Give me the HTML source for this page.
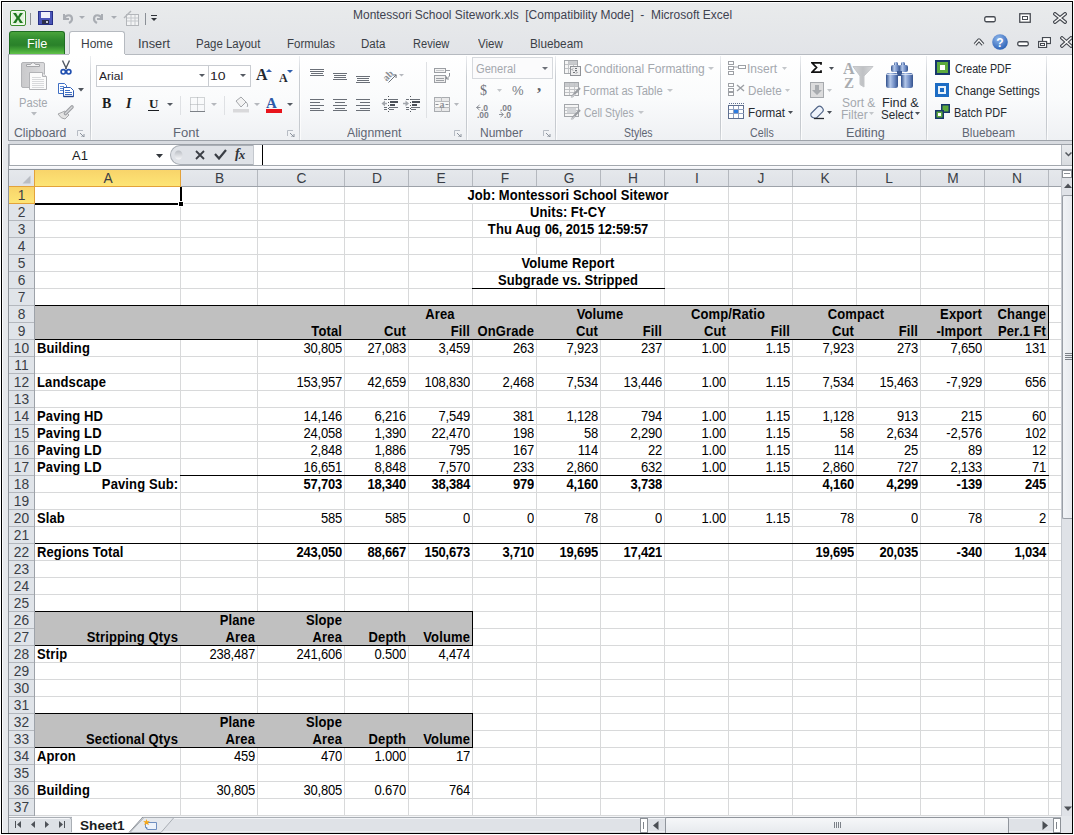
<!DOCTYPE html>
<html><head><meta charset="utf-8"><title>Excel</title>
<style>
html,body{margin:0;padding:0;}
body{width:1074px;height:835px;position:relative;overflow:hidden;background:#fff;font-family:'Liberation Sans', sans-serif;}
</style></head><body>
<div style="position:absolute;left:1px;top:1px;width:1072px;height:833px;background:#000;"></div>
<div style="position:absolute;left:2px;top:2px;width:1070px;height:831px;background:linear-gradient(#e9ebec,#e2e4e8 52px,#e6e8eb 60px,#e7e9ec);"></div>
<div style="position:absolute;left:2px;top:2px;width:1070px;height:1px;background:#fbfbfc;"></div>
<div style="position:absolute;left:2px;top:2px;width:1px;height:831px;background:#fbfbfc;"></div>
<svg style="position:absolute;left:10px;top:10px" width="16" height="16" viewBox="0 0 16 16"><rect x="0.5" y="0.5" width="15" height="15" rx="1.5" fill="#f4fbf2" stroke="#3e8e2f"/><rect x="2" y="2" width="12" height="12" fill="#e2f2dc"/><path d="M3 3 L6 3 L8 6.5 L10 3 L13 3 L9.5 8 L13 13 L10 13 L8 9.5 L6 13 L3 13 L6.5 8 Z" fill="#1f7a1f"/></svg>
<div style="position:absolute;left:30px;top:13px;width:1px;height:12px;background:#8a8f96;"></div>
<svg style="position:absolute;left:38px;top:11px" width="15" height="14" viewBox="0 0 15 14"><rect x="0.5" y="0.5" width="14" height="13" fill="#4a55b8" stroke="#262f86"/><rect x="3" y="1" width="9" height="6" fill="#f0f2fa"/><rect x="4" y="9" width="7" height="4" fill="#2b2f4a"/><rect x="8" y="10" width="2" height="2" fill="#c8cbd8"/></svg>
<svg style="position:absolute;left:61px;top:12px" width="13" height="12" viewBox="0 0 13 12"><path d="M3 2 L3 7 L8 7" fill="none" stroke="#a9adb3" stroke-width="2"/><path d="M3 7 C5 2 11 2 11 7 C11 9 10 10 8 11" fill="none" stroke="#a9adb3" stroke-width="2.2"/></svg>
<svg style="position:absolute;left:79px;top:16px" width="6" height="4" viewBox="0 0 6 4"><path d="M0 0 L6 0 L3 3 Z" fill="#a9adb3"/></svg>
<svg style="position:absolute;left:92px;top:12px" width="13" height="12" viewBox="0 0 13 12"><path d="M10 2 L10 7 L5 7" fill="none" stroke="#a9adb3" stroke-width="2"/><path d="M10 7 C8 2 2 2 2 7 C2 9 3 10 5 11" fill="none" stroke="#a9adb3" stroke-width="2.2"/></svg>
<svg style="position:absolute;left:111px;top:16px" width="6" height="4" viewBox="0 0 6 4"><path d="M0 0 L6 0 L3 3 Z" fill="#a9adb3"/></svg>
<svg style="position:absolute;left:123px;top:10px" width="17" height="16" viewBox="0 0 17 16"><rect x="3.5" y="4.5" width="12" height="11" fill="#f2f3f4" stroke="#b3b6ba"/><path d="M4 8h11M4 11h11M8 5v10M12 5v10" stroke="#c4c7cb"/><path d="M1 8 L8 1" stroke="#b3b6ba" stroke-width="1.5"/></svg>
<div style="position:absolute;left:145px;top:13px;width:1px;height:12px;background:#8a8f96;"></div>
<svg style="position:absolute;left:151px;top:15px" width="6" height="7" viewBox="0 0 6 7"><rect x="0" y="0" width="6" height="1" fill="#30343a"/><path d="M0 3 L6 3 L3 6 Z" fill="#30343a"/></svg>
<div style="position:absolute;left:353.00px;top:8px;white-space:nowrap;transform-origin:0 0;font:12px 'Liberation Sans', sans-serif;color:#3e4250;transform:scaleX(0.9974);">Montessori School Sitework.xls&nbsp; [Compatibility Mode]&nbsp; -&nbsp; Microsoft Excel</div>
<svg style="position:absolute;left:984px;top:16px" width="12" height="7" viewBox="0 0 12 7"><rect x="0.75" y="0.75" width="10.5" height="5" rx="1.5" fill="#fff" stroke="#474b52" stroke-width="1.3"/></svg>
<svg style="position:absolute;left:1019px;top:13px" width="12" height="10" viewBox="0 0 12 10"><rect x="0.75" y="0.75" width="10.5" height="8.5" fill="#fff" stroke="#474b52" stroke-width="1.3"/><rect x="3.5" y="3.5" width="5" height="3" fill="none" stroke="#474b52"/></svg>
<svg style="position:absolute;left:1053px;top:12px" width="14" height="12" viewBox="0 0 14 12"><path d="M2 2 L12 10 M12 2 L2 10" stroke="#474b52" stroke-width="3.8" stroke-linecap="square"/><path d="M2 2 L12 10 M12 2 L2 10" stroke="#fafafa" stroke-width="1.5" stroke-linecap="square"/></svg>
<div style="position:absolute;left:9px;top:31px;width:56px;height:23px;background:linear-gradient(#4aa43c,#2f8a2e 35%,#2a812a 60%,#48a93a 85%,#62c24a);border:1px solid #1f6d22;border-bottom:none;border-radius:3px 3px 0 0;box-sizing:border-box;"></div>
<div style="position:absolute;left:26.94px;top:37px;white-space:nowrap;transform-origin:0 0;font:12px 'Liberation Sans', sans-serif;color:#fff;transform:scaleX(1.0556);">File</div>
<div style="position:absolute;left:69px;top:31px;width:56px;height:24px;background:#fff;border:1px solid #b6bac0;border-bottom:none;border-radius:3px 3px 0 0;box-sizing:border-box;"></div>
<div style="position:absolute;left:81.00px;top:37px;white-space:nowrap;transform-origin:0 0;font:12px 'Liberation Sans', sans-serif;color:#3b3f46;transform:scaleX(1.0000);">Home</div>
<div style="position:absolute;left:137.93px;top:37px;white-space:nowrap;transform-origin:0 0;font:12px 'Liberation Sans', sans-serif;color:#3b3f46;transform:scaleX(1.0690);">Insert</div>
<div style="position:absolute;left:196.05px;top:37px;white-space:nowrap;transform-origin:0 0;font:12px 'Liberation Sans', sans-serif;color:#3b3f46;transform:scaleX(0.9545);">Page Layout</div>
<div style="position:absolute;left:287.04px;top:37px;white-space:nowrap;transform-origin:0 0;font:12px 'Liberation Sans', sans-serif;color:#3b3f46;transform:scaleX(0.9592);">Formulas</div>
<div style="position:absolute;left:361.04px;top:37px;white-space:nowrap;transform-origin:0 0;font:12px 'Liberation Sans', sans-serif;color:#3b3f46;transform:scaleX(0.9600);">Data</div>
<div style="position:absolute;left:413.08px;top:37px;white-space:nowrap;transform-origin:0 0;font:12px 'Liberation Sans', sans-serif;color:#3b3f46;transform:scaleX(0.9231);">Review</div>
<div style="position:absolute;left:478.00px;top:37px;white-space:nowrap;transform-origin:0 0;font:12px 'Liberation Sans', sans-serif;color:#3b3f46;transform:scaleX(0.9615);">View</div>
<div style="position:absolute;left:530.02px;top:37px;white-space:nowrap;transform-origin:0 0;font:12px 'Liberation Sans', sans-serif;color:#3b3f46;transform:scaleX(0.9808);">Bluebeam</div>
<svg style="position:absolute;left:973px;top:37px" width="12" height="10" viewBox="0 0 12 10"><path d="M2 7.5 L6 3 L10 7.5" fill="none" stroke="#474b52" stroke-width="3.4" stroke-linejoin="round"/><path d="M2 7.5 L6 3 L10 7.5" fill="none" stroke="#fafafa" stroke-width="1.3"/></svg>
<svg style="position:absolute;left:992px;top:34px" width="16" height="16" viewBox="0 0 16 16"><defs><radialGradient id="hg" cx="40%" cy="30%" r="70%"><stop offset="0" stop-color="#8fb6ea"/><stop offset="1" stop-color="#2f64b8"/></radialGradient></defs><circle cx="8" cy="8" r="7.8" fill="url(#hg)"/><text x="8" y="13" text-anchor="middle" font-family="Liberation Sans" font-weight="bold" font-size="12" fill="#fff">?</text></svg>
<svg style="position:absolute;left:1017px;top:41px" width="12" height="6" viewBox="0 0 12 6"><rect x="0.75" y="0.75" width="10.5" height="4" rx="1.5" fill="#fff" stroke="#474b52" stroke-width="1.3"/></svg>
<svg style="position:absolute;left:1038px;top:37px" width="13" height="11" viewBox="0 0 13 11"><rect x="4.5" y="0.5" width="8" height="6" fill="#fff" stroke="#474b52" stroke-width="1.2"/><rect x="0.6" y="4.5" width="8" height="6" fill="#fff" stroke="#474b52" stroke-width="1.2"/><rect x="2.5" y="6.5" width="4" height="2" fill="none" stroke="#474b52"/></svg>
<svg style="position:absolute;left:1060px;top:36px" width="12" height="12" viewBox="0 0 12 12"><path d="M2 2 L11 10 M11 2 L2 10" stroke="#474b52" stroke-width="3.6" stroke-linecap="square"/><path d="M2 2 L11 10 M11 2 L2 10" stroke="#fafafa" stroke-width="1.4" stroke-linecap="square"/></svg>
<div style="position:absolute;left:8px;top:54px;width:1064px;height:87px;background:linear-gradient(#ffffff,#fafbfc 50%,#eef0f3);border-top:1px solid #b6bac0;border-left:1px solid #9ca1a8;box-sizing:border-box;"></div>
<div style="position:absolute;left:69px;top:54px;width:56px;height:1px;background:#fff;"></div>
<div style="position:absolute;left:8px;top:140px;width:1064px;height:1px;background:#9ea3aa;"></div>
<div style="position:absolute;left:9px;top:141px;width:1063px;height:3px;background:#d8dbe0;"></div>
<div style="position:absolute;left:90px;top:56px;width:1px;height:84px;background:linear-gradient(#eceef1,#c9cdd2 25%,#c6cacf 85%,#d5d8dc);"></div>
<div style="position:absolute;left:91px;top:56px;width:1px;height:84px;background:rgba(255,255,255,0.7);"></div>
<div style="position:absolute;left:299px;top:56px;width:1px;height:84px;background:linear-gradient(#eceef1,#c9cdd2 25%,#c6cacf 85%,#d5d8dc);"></div>
<div style="position:absolute;left:300px;top:56px;width:1px;height:84px;background:rgba(255,255,255,0.7);"></div>
<div style="position:absolute;left:466px;top:56px;width:1px;height:84px;background:linear-gradient(#eceef1,#c9cdd2 25%,#c6cacf 85%,#d5d8dc);"></div>
<div style="position:absolute;left:467px;top:56px;width:1px;height:84px;background:rgba(255,255,255,0.7);"></div>
<div style="position:absolute;left:555px;top:56px;width:1px;height:84px;background:linear-gradient(#eceef1,#c9cdd2 25%,#c6cacf 85%,#d5d8dc);"></div>
<div style="position:absolute;left:556px;top:56px;width:1px;height:84px;background:rgba(255,255,255,0.7);"></div>
<div style="position:absolute;left:720px;top:56px;width:1px;height:84px;background:linear-gradient(#eceef1,#c9cdd2 25%,#c6cacf 85%,#d5d8dc);"></div>
<div style="position:absolute;left:721px;top:56px;width:1px;height:84px;background:rgba(255,255,255,0.7);"></div>
<div style="position:absolute;left:800px;top:56px;width:1px;height:84px;background:linear-gradient(#eceef1,#c9cdd2 25%,#c6cacf 85%,#d5d8dc);"></div>
<div style="position:absolute;left:801px;top:56px;width:1px;height:84px;background:rgba(255,255,255,0.7);"></div>
<div style="position:absolute;left:926px;top:56px;width:1px;height:84px;background:linear-gradient(#eceef1,#c9cdd2 25%,#c6cacf 85%,#d5d8dc);"></div>
<div style="position:absolute;left:927px;top:56px;width:1px;height:84px;background:rgba(255,255,255,0.7);"></div>
<div style="position:absolute;left:1046px;top:56px;width:1px;height:84px;background:linear-gradient(#eceef1,#c9cdd2 25%,#c6cacf 85%,#d5d8dc);"></div>
<div style="position:absolute;left:1047px;top:56px;width:1px;height:84px;background:rgba(255,255,255,0.7);"></div>
<div style="position:absolute;left:14.00px;top:126px;white-space:nowrap;transform-origin:0 0;font:12px 'Liberation Sans', sans-serif;color:#5f6673;transform:scaleX(1.0196);">Clipboard</div>
<div style="position:absolute;left:172.91px;top:126px;white-space:nowrap;transform-origin:0 0;font:12px 'Liberation Sans', sans-serif;color:#5f6673;transform:scaleX(1.0870);">Font</div>
<div style="position:absolute;left:347.00px;top:126px;white-space:nowrap;transform-origin:0 0;font:12px 'Liberation Sans', sans-serif;color:#5f6673;transform:scaleX(1.0189);">Alignment</div>
<div style="position:absolute;left:480.00px;top:126px;white-space:nowrap;transform-origin:0 0;font:12px 'Liberation Sans', sans-serif;color:#5f6673;transform:scaleX(1.0000);">Number</div>
<div style="position:absolute;left:624.12px;top:126px;white-space:nowrap;transform-origin:0 0;font:12px 'Liberation Sans', sans-serif;color:#5f6673;transform:scaleX(0.8750);">Styles</div>
<div style="position:absolute;left:750.00px;top:126px;white-space:nowrap;transform-origin:0 0;font:12px 'Liberation Sans', sans-serif;color:#5f6673;transform:scaleX(0.8889);">Cells</div>
<div style="position:absolute;left:845.94px;top:126px;white-space:nowrap;transform-origin:0 0;font:12px 'Liberation Sans', sans-serif;color:#5f6673;transform:scaleX(1.0571);">Editing</div>
<div style="position:absolute;left:962.02px;top:126px;white-space:nowrap;transform-origin:0 0;font:12px 'Liberation Sans', sans-serif;color:#5f6673;transform:scaleX(0.9808);">Bluebeam</div>
<svg style="position:absolute;left:77px;top:130px" width="8" height="7" viewBox="0 0 8 7"><path d="M0.5 6 L0.5 0.5 L6 0.5" fill="none" stroke="#b7bcc4"/><path d="M3 3 L7 7 M7 4 L7 7 L4 7" fill="none" stroke="#8c939d"/></svg>
<svg style="position:absolute;left:287px;top:130px" width="8" height="7" viewBox="0 0 8 7"><path d="M0.5 6 L0.5 0.5 L6 0.5" fill="none" stroke="#b7bcc4"/><path d="M3 3 L7 7 M7 4 L7 7 L4 7" fill="none" stroke="#8c939d"/></svg>
<svg style="position:absolute;left:454px;top:130px" width="8" height="7" viewBox="0 0 8 7"><path d="M0.5 6 L0.5 0.5 L6 0.5" fill="none" stroke="#b7bcc4"/><path d="M3 3 L7 7 M7 4 L7 7 L4 7" fill="none" stroke="#8c939d"/></svg>
<svg style="position:absolute;left:543px;top:130px" width="8" height="7" viewBox="0 0 8 7"><path d="M0.5 6 L0.5 0.5 L6 0.5" fill="none" stroke="#b7bcc4"/><path d="M3 3 L7 7 M7 4 L7 7 L4 7" fill="none" stroke="#8c939d"/></svg>
<svg style="position:absolute;left:20px;top:60px" width="28" height="31" viewBox="0 0 28 31"><defs><linearGradient id="cbg" x1="0" x2="1"><stop offset="0" stop-color="#c9c9cb"/><stop offset="1" stop-color="#dcdcde"/></linearGradient></defs><rect x="1.5" y="2.5" width="23" height="25" rx="1.5" fill="url(#cbg)" stroke="#b3b4b7"/><path d="M6.5 6.5 L6.5 4.5 L10.5 4.5 Q13 0.5 15.5 4.5 L19.5 4.5 L19.5 6.5 Z" fill="#f2f2f3" stroke="#a4a5a8"/><path d="M9.5 12.5 L22.5 12.5 L26.5 16.5 L26.5 29.5 L9.5 29.5 Z" fill="#fbfbfb" stroke="#b2b3b6"/><path d="M22.5 12.5 L22.5 16.5 L26.5 16.5" fill="#e6e6e7" stroke="#b2b3b6"/><path d="M12 17.5h9M12 19.5h12M12 21.5h12M12 23.5h12M12 25.5h12M12 27.5h12" stroke="#d8d9db"/></svg>
<div style="position:absolute;left:19.07px;top:96px;white-space:nowrap;transform-origin:0 0;font:12px 'Liberation Sans', sans-serif;color:#a4a8ae;transform:scaleX(0.9310);">Paste</div>
<svg style="position:absolute;left:31px;top:112px" width="6" height="4" viewBox="0 0 6 4"><path d="M0 0 L6 0 L3 3.5 Z" fill="#b8bbc0"/></svg>
<svg style="position:absolute;left:60px;top:60px" width="12" height="16" viewBox="0 0 12 16"><path d="M2.5 0.5 L6.5 9 M9.5 0.5 L5.5 9" stroke="#4f5763" stroke-width="1.4"/><circle cx="3.3" cy="11.8" r="2.2" fill="#fff" stroke="#2150b0" stroke-width="1.7"/><circle cx="8.7" cy="11.8" r="2.2" fill="#fff" stroke="#2150b0" stroke-width="1.7"/></svg>
<svg style="position:absolute;left:57px;top:82px" width="18" height="16" viewBox="0 0 18 16"><path d="M1.5 1.5 L7.5 1.5 L9.5 3.5 L9.5 11.5 L1.5 11.5 Z" fill="#fff" stroke="#3f6fc4"/><path d="M3 4.5h4M3 6.5h5M3 8.5h5" stroke="#5b8ad6"/><path d="M6.5 5.5 L13.5 5.5 L16.5 8.5 L16.5 14.5 L6.5 14.5 Z" fill="#fff" stroke="#2f5db4"/><path d="M8 8.5h5M8 10.5h7M8 12.5h7" stroke="#3f6fc4"/><path d="M6.5 14.5h10" stroke="#1e3f8a" stroke-width="1.4"/></svg>
<svg style="position:absolute;left:78px;top:88px" width="6" height="4" viewBox="0 0 6 4"><path d="M0 0 L6 0 L3 3.5 Z" fill="#4e535b"/></svg>
<svg style="position:absolute;left:57px;top:104px" width="18" height="16" viewBox="0 0 18 16"><path d="M1 10 L8 7 L12 11 L8 15 Q4 15 1 10 Z" fill="#e3e3e3" stroke="#a6a7aa"/><path d="M8.5 9.5 L15 3" stroke="#9d9fa3" stroke-width="3.6" stroke-linecap="round"/><path d="M8.5 9.5 L15 3" stroke="#d6d7d9" stroke-width="1.4" stroke-linecap="round"/></svg>
<div style="position:absolute;left:96px;top:65px;width:113px;height:22px;background:#fff;border:1px solid #c9ccd1;box-sizing:border-box;"></div>
<div style="position:absolute;left:208px;top:65px;width:1px;height:22px;background:#c9ccd1;"></div>
<div style="position:absolute;left:208px;top:65px;width:43px;height:22px;background:#fff;border:1px solid #c9ccd1;box-sizing:border-box;"></div>
<div style="position:absolute;left:99.00px;top:70px;white-space:nowrap;transform-origin:0 0;font:11px 'Liberation Sans', sans-serif;color:#1e2228;transform:scaleX(1.0952);">Arial</div>
<div style="position:absolute;left:209.73px;top:70px;white-space:nowrap;transform-origin:0 0;font:11px 'Liberation Sans', sans-serif;color:#1e2228;transform:scaleX(1.2727);">10</div>
<svg style="position:absolute;left:199px;top:74px" width="6" height="3" viewBox="0 0 6 3"><path d="M0 0 L6 0 L3 3 Z" fill="#555a62"/></svg>
<svg style="position:absolute;left:240px;top:74px" width="6" height="3" viewBox="0 0 6 3"><path d="M0 0 L6 0 L3 3 Z" fill="#555a62"/></svg>
<div style="position:absolute;left:256px;top:66px;white-space:nowrap;font:bold 16px 'Liberation Serif', serif;color:#25292f;">A</div>
<svg style="position:absolute;left:266px;top:69px" width="6" height="4" viewBox="0 0 6 4"><path d="M0 3 L3 0 L6 3 Z" fill="#2f5fae"/></svg>
<div style="position:absolute;left:279px;top:71px;white-space:nowrap;font:bold 12px 'Liberation Serif', serif;color:#25292f;">A</div>
<svg style="position:absolute;left:287px;top:70px" width="6" height="4" viewBox="0 0 6 4"><path d="M0 0 L6 0 L3 3 Z" fill="#2f5fae"/></svg>
<div style="position:absolute;left:102px;top:96px;white-space:nowrap;font:bold 14px 'Liberation Serif', serif;color:#1a1d22;">B</div>
<div style="position:absolute;left:126px;top:96px;white-space:nowrap;font:italic bold 14px 'Liberation Serif', serif;color:#1a1d22;">I</div>
<div style="position:absolute;left:149px;top:96px;white-space:nowrap;font:bold 13px 'Liberation Serif', serif;color:#1a1d22;">U</div>
<div style="position:absolute;left:148px;top:110px;width:11px;height:1px;background:#1a1d22;"></div>
<svg style="position:absolute;left:167px;top:103px" width="6" height="3" viewBox="0 0 6 3"><path d="M0 0 L6 0 L3 3 Z" fill="#555a62"/></svg>
<div style="position:absolute;left:180px;top:96px;width:1px;height:19px;background:#dfe1e4;"></div>
<svg style="position:absolute;left:190px;top:97px" width="15" height="15" viewBox="0 0 15 15"><path d="M0.5 0.5h14v14h-14zM7.5 0.5v14M0.5 7.5h14" fill="none" stroke="#a9acb1" stroke-dasharray="1 1"/><path d="M0 14.5h15" stroke="#7d8187"/></svg>
<svg style="position:absolute;left:211px;top:103px" width="6" height="3" viewBox="0 0 6 3"><path d="M0 0 L6 0 L3 3 Z" fill="#b5b8bd"/></svg>
<div style="position:absolute;left:224px;top:96px;width:1px;height:19px;background:#dfe1e4;"></div>
<svg style="position:absolute;left:232px;top:96px" width="18" height="17" viewBox="0 0 18 17"><path d="M4 5 L9 1 L14 6 L9 11 Z" fill="#f3f3f3" stroke="#a3a6aa"/><path d="M14 6 C16 8 16 10 15 11" stroke="#a3a6aa" fill="none"/><rect x="1" y="13" width="16" height="3.5" fill="#d9d9db"/></svg>
<svg style="position:absolute;left:254px;top:103px" width="6" height="3" viewBox="0 0 6 3"><path d="M0 0 L6 0 L3 3 Z" fill="#b5b8bd"/></svg>
<div style="position:absolute;left:266px;top:95px;white-space:nowrap;font:bold 15px 'Liberation Serif', serif;color:#2d5aa8;">A</div>
<div style="position:absolute;left:266px;top:109px;width:16px;height:4px;background:#e8141c;"></div>
<svg style="position:absolute;left:287px;top:103px" width="6" height="3" viewBox="0 0 6 3"><path d="M0 0 L6 0 L3 3 Z" fill="#555a62"/></svg>
<svg style="position:absolute;left:310px;top:69px" width="15" height="8" viewBox="0 0 15 8"><path d="M0 0.5h14M0 2.5h14M1 4.5h12M0 6.5h14" stroke="#6a6f77"/></svg>
<svg style="position:absolute;left:333px;top:73px" width="15" height="8" viewBox="0 0 15 8"><path d="M0 0.5h14M1 2.5h12M1 4.5h12M0 6.5h14" stroke="#6a6f77"/></svg>
<svg style="position:absolute;left:356px;top:76px" width="15" height="8" viewBox="0 0 15 8"><path d="M0 0.5h14M1 2.5h12M1 4.5h12M0 6.5h14" stroke="#6a6f77"/></svg>
<svg style="position:absolute;left:381px;top:68px" width="24" height="16" viewBox="0 0 24 16"><text x="2" y="11" transform="rotate(-45 7 8)" font-family="Liberation Serif" font-weight="bold" font-size="10" fill="#8a8e94">ab</text><path d="M7.5 14.5 L15 7 M12 7 L15.2 6.8 L15 10" stroke="#6f747b" fill="none"/><path d="M18 6 L23 6 L20.5 8.5 Z" fill="#b5b8bd"/></svg>
<svg style="position:absolute;left:310px;top:99px" width="15" height="12" viewBox="0 0 15 12"><path d="M0 0.5h14M0 3.5h10M0 6.5h14M0 9.5h10M0 11.5h14" stroke="#6a6f77"/></svg>
<svg style="position:absolute;left:333px;top:99px" width="15" height="12" viewBox="0 0 15 12"><path d="M0 0.5h14M2 3.5h10M0 6.5h14M2 9.5h10M0 11.5h14" stroke="#6a6f77"/></svg>
<svg style="position:absolute;left:356px;top:99px" width="15" height="12" viewBox="0 0 15 12"><path d="M0 0.5h14M4 3.5h10M0 6.5h14M4 9.5h10M0 11.5h14" stroke="#6a6f77"/></svg>
<svg style="position:absolute;left:381px;top:96px" width="17" height="17" viewBox="0 0 17 17"><path d="M7.5 0v17" stroke="#55595f" stroke-dasharray="1 2"/><path d="M3 3.5h3M8 3.5h9M3 11.5h3M8 11.5h9M3 13.5h3M8 13.5h5" stroke="#6a6f77"/><path d="M9 6h8M9 9h5" stroke="#4b5058" stroke-width="2"/><path d="M0.5 7.5 L4 4.5 L4 10.5 Z" fill="#a2a6ac"/><path d="M3 7.5h3" stroke="#a2a6ac" stroke-width="1.5"/></svg>
<svg style="position:absolute;left:403px;top:96px" width="17" height="17" viewBox="0 0 17 17"><path d="M7.5 0v17" stroke="#55595f" stroke-dasharray="1 2"/><path d="M3 3.5h3M8 3.5h9M3 11.5h3M8 11.5h9M3 13.5h3M8 13.5h5" stroke="#6a6f77"/><path d="M9 6h8M9 9h5" stroke="#4b5058" stroke-width="2"/><path d="M6 7.5 L2.5 4.5 L2.5 10.5 Z" fill="#a2a6ac"/><path d="M0 7.5h3" stroke="#a2a6ac" stroke-width="1.5"/></svg>
<div style="position:absolute;left:426px;top:62px;width:1px;height:56px;background:#dfe1e4;"></div>
<svg style="position:absolute;left:434px;top:68px" width="17" height="16" viewBox="0 0 17 16"><rect x="0.5" y="0.5" width="11" height="4" fill="#f4f4f4" stroke="#9c9fa4"/><path d="M2 2.5h8" stroke="#c5c7ca"/><path d="M11 2.5h5" stroke="#9c9fa4"/><rect x="0.5" y="7.5" width="11" height="7" fill="#efefef" stroke="#9c9fa4"/><path d="M2 10.5h8M2 12.5h8" stroke="#9c9fa4"/><path d="M15.5 5 L15.5 8 L12.5 11 M12.5 8.5 L12.5 11 L15 11" fill="none" stroke="#8a8e94"/></svg>
<svg style="position:absolute;left:434px;top:97px" width="16" height="15" viewBox="0 0 16 15"><rect x="0.5" y="0.5" width="15" height="14" fill="#e9e9ea" stroke="#a9acb0"/><path d="M0 4.5h16M0 10.5h16M7.5 0v4M7.5 11v4" stroke="#b9bbbe"/><rect x="1" y="5" width="14" height="5" fill="#f7f7f7"/><path d="M1.5 7.5h3M11.5 7.5h3" stroke="#8e9196"/><text x="8" y="11" text-anchor="middle" font-family="Liberation Serif" font-weight="bold" font-size="10" fill="#8e9196">a</text></svg>
<svg style="position:absolute;left:454px;top:103px" width="5" height="3" viewBox="0 0 5 3"><path d="M0 0 L5 0 L2.5 3 Z" fill="#b5b8bd"/></svg>
<div style="position:absolute;left:472px;top:57px;width:81px;height:22px;background:#fbfbfc;border:1px solid #d6d9dd;box-sizing:border-box;"></div>
<div style="position:absolute;left:476.00px;top:62px;white-space:nowrap;transform-origin:0 0;font:12px 'Liberation Sans', sans-serif;color:#a4a8ae;transform:scaleX(0.9286);">General</div>
<svg style="position:absolute;left:542px;top:67px" width="6" height="3" viewBox="0 0 6 3"><path d="M0 0 L6 0 L3 3 Z" fill="#6c7078"/></svg>
<div style="position:absolute;left:480px;top:83px;white-space:nowrap;font:14px 'Liberation Serif', serif;color:#6e727a;">$</div>
<svg style="position:absolute;left:497px;top:89px" width="5" height="3" viewBox="0 0 5 3"><path d="M0 0 L5 0 L2.5 3 Z" fill="#c3c6ca"/></svg>
<div style="position:absolute;left:512px;top:83px;white-space:nowrap;font:13px 'Liberation Sans', sans-serif;color:#7a7e86;">%</div>
<div style="position:absolute;left:537px;top:76px;white-space:nowrap;font:bold 17px 'Liberation Serif', serif;color:#5f636b;">,</div>
<svg style="position:absolute;left:476px;top:104px" width="16" height="15" viewBox="0 0 16 15"><path d="M0.5 3.5 L3.5 1 M0.5 3.5 L3.5 6 M0.5 3.5h4" stroke="#8f939a" fill="none"/><text x="5" y="7" font-family="Liberation Sans" font-weight="bold" font-size="8.5" fill="#7d8188">.0</text><text x="1" y="14" font-family="Liberation Sans" font-weight="bold" font-size="8.5" fill="#7d8188">.00</text></svg>
<svg style="position:absolute;left:498px;top:104px" width="16" height="15" viewBox="0 0 16 15"><path d="M1 10.5h4 M5.5 10.5 L2.5 8 M5.5 10.5 L2.5 13" stroke="#8f939a" fill="none"/><text x="2" y="7" font-family="Liberation Sans" font-weight="bold" font-size="8.5" fill="#7d8188">.00</text><text x="6" y="14" font-family="Liberation Sans" font-weight="bold" font-size="8.5" fill="#7d8188">.0</text></svg>
<svg style="position:absolute;left:564px;top:60px" width="17" height="16" viewBox="0 0 17 16"><rect x="0.5" y="0.5" width="13" height="13" fill="#f5f5f5" stroke="#a3a6aa"/><path d="M1 4.5h12M1 8.5h12M4.5 1v12M9.5 1v12" stroke="#c1c3c6"/><rect x="5" y="1" width="8" height="3" fill="#c9cbce"/><rect x="6.5" y="6.5" width="10" height="9" fill="#ededee" stroke="#8f9297"/><path d="M9 8.5 L8 9.5 L9 10.5M11 8.5h2M11 10.5h2M9 12.5h2M12 11.5 L13 12.5 L12 13.5" stroke="#6f7378" fill="none"/></svg>
<svg style="position:absolute;left:564px;top:82px" width="17" height="16" viewBox="0 0 17 16"><rect x="0.5" y="0.5" width="14" height="13" fill="#f5f5f5" stroke="#a3a6aa"/><rect x="1" y="1" width="13" height="3" fill="#c9cbce"/><path d="M1 4.5h13M1 7.5h13M1 10.5h13M5.5 1v12M10.5 1v12" stroke="#c1c3c6"/><path d="M8 15 Q10 12 16 6" stroke="#9a9da2" stroke-width="2.2" fill="none"/><path d="M7 15.5 Q9 14 11 12.5" stroke="#c8cacd" stroke-width="1.5" fill="none"/></svg>
<svg style="position:absolute;left:564px;top:104px" width="17" height="16" viewBox="0 0 17 16"><rect x="0.5" y="0.5" width="14" height="12" fill="#f5f5f5" stroke="#a3a6aa"/><path d="M1 3.5h13M1 6.5h13M1 9.5h13" stroke="#c1c3c6"/><rect x="3" y="4" width="9" height="5" fill="#d3d5d8"/><path d="M8 15 Q10 12 16 6" stroke="#9a9da2" stroke-width="2.2" fill="none"/><path d="M7 15.5 Q9 14 11 12.5" stroke="#c8cacd" stroke-width="1.5" fill="none"/></svg>
<div style="position:absolute;left:584.00px;top:62px;white-space:nowrap;transform-origin:0 0;font:12px 'Liberation Sans', sans-serif;color:#a4a8ae;transform:scaleX(1.0000);">Conditional Formatting</div>
<div style="position:absolute;left:583.07px;top:84px;white-space:nowrap;transform-origin:0 0;font:12px 'Liberation Sans', sans-serif;color:#a4a8ae;transform:scaleX(0.9294);">Format as Table</div>
<div style="position:absolute;left:584.00px;top:106px;white-space:nowrap;transform-origin:0 0;font:12px 'Liberation Sans', sans-serif;color:#a4a8ae;transform:scaleX(0.8772);">Cell Styles</div>
<svg style="position:absolute;left:708px;top:67px" width="6" height="3" viewBox="0 0 6 3"><path d="M0 0 L6 0 L3 3 Z" fill="#c3c6ca"/></svg>
<svg style="position:absolute;left:667px;top:89px" width="6" height="3" viewBox="0 0 6 3"><path d="M0 0 L6 0 L3 3 Z" fill="#c3c6ca"/></svg>
<svg style="position:absolute;left:638px;top:111px" width="6" height="3" viewBox="0 0 6 3"><path d="M0 0 L6 0 L3 3 Z" fill="#c3c6ca"/></svg>
<svg style="position:absolute;left:728px;top:61px" width="18" height="14" viewBox="0 0 18 14"><rect x="0.5" y="0.5" width="5" height="3" fill="#fff" stroke="#9da0a5"/><rect x="0.5" y="5.5" width="5" height="3" fill="#fff" stroke="#9da0a5"/><rect x="0.5" y="10.5" width="5" height="3" fill="#fff" stroke="#9da0a5"/><rect x="10.5" y="4.5" width="7" height="3" fill="#fff" stroke="#9da0a5"/><path d="M6 6h4" stroke="#9da0a5"/></svg>
<svg style="position:absolute;left:728px;top:83px" width="18" height="13" viewBox="0 0 18 13"><rect x="0.5" y="0.5" width="5" height="3" fill="#fff" stroke="#9da0a5"/><rect x="0.5" y="5.5" width="5" height="3" fill="#fff" stroke="#9da0a5"/><rect x="0.5" y="9.5" width="5" height="3" fill="#fff" stroke="#9da0a5"/><path d="M9 2 L16 8 M16 2 L9 8" stroke="#9da0a5" stroke-width="1.4"/></svg>
<svg style="position:absolute;left:728px;top:103px" width="17" height="17" viewBox="0 0 17 17"><rect x="0.5" y="2.5" width="15" height="13" fill="#fff" stroke="#5f6f8f"/><path d="M1 6.5h15M1 10.5h15M5.5 3v12M10.5 3v12" stroke="#90a0c0"/><rect x="6" y="7" width="4" height="3" fill="#2f7de0"/><path d="M1 0.5h15" stroke="#5f6f8f" stroke-dasharray="1 1"/></svg>
<div style="position:absolute;left:747.00px;top:62px;white-space:nowrap;transform-origin:0 0;font:12px 'Liberation Sans', sans-serif;color:#a4a8ae;transform:scaleX(1.0000);">Insert</div>
<div style="position:absolute;left:748.03px;top:84px;white-space:nowrap;transform-origin:0 0;font:12px 'Liberation Sans', sans-serif;color:#a4a8ae;transform:scaleX(0.9697);">Delete</div>
<div style="position:absolute;left:748.03px;top:106px;white-space:nowrap;transform-origin:0 0;font:12px 'Liberation Sans', sans-serif;color:#262a30;transform:scaleX(0.9730);">Format</div>
<svg style="position:absolute;left:782px;top:67px" width="5" height="3" viewBox="0 0 5 3"><path d="M0 0 L5 0 L2.5 3 Z" fill="#c3c6ca"/></svg>
<svg style="position:absolute;left:785px;top:89px" width="5" height="3" viewBox="0 0 5 3"><path d="M0 0 L5 0 L2.5 3 Z" fill="#c3c6ca"/></svg>
<svg style="position:absolute;left:788px;top:111px" width="5" height="3" viewBox="0 0 5 3"><path d="M0 0 L5 0 L2.5 3 Z" fill="#4a4f57"/></svg>
<svg style="position:absolute;left:811px;top:62px" width="11" height="11" viewBox="0 0 11 11"><path d="M10 2.8 L10 0.8 L1 0.8 L5.5 5.5 L1 10.2 L10 10.2 L10 8.2" fill="none" stroke="#111" stroke-width="1.8" stroke-linejoin="miter"/></svg>
<svg style="position:absolute;left:829px;top:67px" width="5" height="3" viewBox="0 0 5 3"><path d="M0 0 L5 0 L2.5 3 Z" fill="#4a4f57"/></svg>
<svg style="position:absolute;left:810px;top:82px" width="14" height="16" viewBox="0 0 14 16"><rect x="0.5" y="0.5" width="13" height="15" fill="#dcdcdd" stroke="#a6a9ad"/><path d="M5 3v5h-3l5 5 5-5h-3v-5z" fill="#a8abaf"/></svg>
<svg style="position:absolute;left:827px;top:89px" width="5" height="3" viewBox="0 0 5 3"><path d="M0 0 L5 0 L2.5 3 Z" fill="#c3c6ca"/></svg>
<svg style="position:absolute;left:809px;top:104px" width="16" height="16" viewBox="0 0 16 16"><path d="M2 9.5 L8.5 3 Q10.5 1.2 12.5 3 L13.5 4 Q15.2 6 13.5 8 L7.5 14 L5 14 Q1 13 2 9.5 Z" fill="#eef3fb" stroke="#506486" stroke-width="1.1"/><path d="M5 14.5h10" stroke="#25292f" stroke-width="1.3"/></svg>
<svg style="position:absolute;left:827px;top:111px" width="5" height="3" viewBox="0 0 5 3"><path d="M0 0 L5 0 L2.5 3 Z" fill="#4a4f57"/></svg>
<svg style="position:absolute;left:843px;top:60px" width="32" height="30" viewBox="0 0 32 30"><defs><linearGradient id="fn" x1="0" x2="1"><stop offset="0" stop-color="#d4d5d7"/><stop offset=".5" stop-color="#bfc1c4"/><stop offset="1" stop-color="#d9dadc"/></linearGradient></defs><path d="M10 6.5 L30 6.5 L21 16 L21 27 L17 24.5 L17 16 Z" fill="url(#fn)" stroke="#c3c5c8"/><text x="0" y="14" font-family="Liberation Serif" font-weight="bold" font-size="16" fill="#a9acb0">A</text><text x="1" y="28" font-family="Liberation Serif" font-weight="bold" font-size="15" fill="#a9acb0">Z</text></svg>
<div style="position:absolute;left:842.00px;top:96px;white-space:nowrap;transform-origin:0 0;font:12px 'Liberation Sans', sans-serif;color:#a4a8ae;transform:scaleX(1.0000);">Sort &amp;</div>
<div style="position:absolute;left:841.00px;top:108px;white-space:nowrap;transform-origin:0 0;font:12px 'Liberation Sans', sans-serif;color:#a4a8ae;transform:scaleX(1.0000);">Filter</div>
<svg style="position:absolute;left:869px;top:112px" width="5" height="3" viewBox="0 0 5 3"><path d="M0 0 L5 0 L2.5 3 Z" fill="#c3c6ca"/></svg>
<svg style="position:absolute;left:885px;top:61px" width="30" height="28" viewBox="0 0 30 28"><defs><linearGradient id="bn" x1="0" x2="1"><stop offset="0" stop-color="#2f4f8c"/><stop offset=".35" stop-color="#b4c8ea"/><stop offset=".7" stop-color="#6f8cc4"/><stop offset="1" stop-color="#34528d"/></linearGradient></defs><rect x="9" y="1" width="4" height="4" rx="1.5" fill="url(#bn)"/><rect x="16" y="1" width="4" height="4" rx="1.5" fill="url(#bn)"/><rect x="6" y="4" width="9" height="7" rx="2" fill="url(#bn)"/><rect x="14" y="4" width="9" height="7" rx="2" fill="url(#bn)"/><rect x="12" y="10" width="5" height="5" fill="#3d5a92"/><rect x="1" y="12" width="12" height="15" rx="2.5" fill="url(#bn)"/><rect x="16" y="12" width="12" height="15" rx="2.5" fill="url(#bn)"/><path d="M1.5 13.5h11M16.5 13.5h11" stroke="#dfe8f7" stroke-width="0.8"/></svg>
<div style="position:absolute;left:881.94px;top:96px;white-space:nowrap;transform-origin:0 0;font:12px 'Liberation Sans', sans-serif;color:#262a30;transform:scaleX(1.0588);">Find &amp;</div>
<div style="position:absolute;left:881.03px;top:108px;white-space:nowrap;transform-origin:0 0;font:12px 'Liberation Sans', sans-serif;color:#262a30;transform:scaleX(0.9688);">Select</div>
<svg style="position:absolute;left:915px;top:112px" width="5" height="3" viewBox="0 0 5 3"><path d="M0 0 L5 0 L2.5 3 Z" fill="#4a4f57"/></svg>
<svg style="position:absolute;left:935px;top:60px" width="15" height="15" viewBox="0 0 15 15"><rect x="0" y="0" width="15" height="15" fill="#17376b"/><rect x="2" y="2" width="11" height="11" fill="#5daa3e"/><rect x="5" y="5" width="5" height="5" fill="#fff"/></svg>
<svg style="position:absolute;left:935px;top:83px" width="14" height="14" viewBox="0 0 14 14"><rect x="0" y="0" width="14" height="14" fill="#1c6cc4"/><rect x="3" y="3" width="8" height="8" fill="#e8f2fb"/><rect x="5" y="5" width="4" height="4" fill="#1c6cc4"/></svg>
<svg style="position:absolute;left:935px;top:104px" width="15" height="15" viewBox="0 0 15 15"><rect x="6" y="0" width="9" height="9" fill="#17376b"/><rect x="7.5" y="1.5" width="6" height="6" fill="#5daa3e"/><rect x="0" y="6" width="9" height="9" fill="#17376b"/><rect x="1.5" y="7.5" width="6" height="6" fill="#5daa3e"/><rect x="3" y="9" width="3" height="3" fill="#fff"/></svg>
<div style="position:absolute;left:955.00px;top:62px;white-space:nowrap;transform-origin:0 0;font:12px 'Liberation Sans', sans-serif;color:#262a30;transform:scaleX(0.8889);">Create PDF</div>
<div style="position:absolute;left:955.00px;top:84px;white-space:nowrap;transform-origin:0 0;font:12px 'Liberation Sans', sans-serif;color:#262a30;transform:scaleX(0.9551);">Change Settings</div>
<div style="position:absolute;left:954.09px;top:106px;white-space:nowrap;transform-origin:0 0;font:12px 'Liberation Sans', sans-serif;color:#262a30;transform:scaleX(0.9123);">Batch PDF</div>
<div style="position:absolute;left:8px;top:144px;width:1064px;height:1px;background:#9ca1a8;"></div>
<div style="position:absolute;left:8px;top:145px;width:1px;height:25px;background:#9ca1a8;"></div>
<div style="position:absolute;left:9px;top:145px;width:1063px;height:20px;background:#fff;"></div>
<div style="position:absolute;left:9px;top:145px;width:1px;height:24px;background:#b8bcc2;"></div>
<div style="position:absolute;left:72px;top:148px;white-space:nowrap;font:13px 'Liberation Sans', sans-serif;color:#1a1d22;">A1</div>
<svg style="position:absolute;left:156px;top:154px" width="7" height="4" viewBox="0 0 7 4"><path d="M0 0 L7 0 L3.5 4 Z" fill="#33373d"/></svg>
<div style="position:absolute;left:170px;top:145px;width:84px;height:20px;background:#dfe2e7;border:1px solid #a9aeb5;border-radius:10px 0 0 10px;border-right:none;box-sizing:border-box;"></div>
<div style="position:absolute;left:253px;top:145px;width:1px;height:20px;background:#c4c8ce;"></div>
<svg style="position:absolute;left:174px;top:150px" width="9" height="10" viewBox="0 0 9 10"><defs><linearGradient id="cg" x1="0" y1="0" x2="0" y2="1"><stop offset="0" stop-color="#b9bdc3"/><stop offset="1" stop-color="#f6f7f9"/></linearGradient></defs><ellipse cx="4.5" cy="5" rx="4" ry="4.5" fill="url(#cg)"/></svg>
<svg style="position:absolute;left:195px;top:150px" width="10" height="10" viewBox="0 0 10 10"><path d="M1 1 L9 9 M9 1 L1 9" stroke="#3a3e45" stroke-width="1.8"/></svg>
<svg style="position:absolute;left:214px;top:149px" width="13" height="11" viewBox="0 0 13 11"><path d="M1 5 L5 9.5 L12 1" fill="none" stroke="#3a3e45" stroke-width="2.2"/></svg>
<div style="position:absolute;left:235px;top:146px;white-space:nowrap;font:bold 14px 'Liberation Serif', serif;color:#30343a;"><i>f</i><i style="font-size:13px;position:relative;top:1px;left:-1px">x</i></div>
<div style="position:absolute;left:262px;top:145px;width:1px;height:20px;background:#000;"></div>
<div style="position:absolute;left:1061px;top:145px;width:11px;height:20px;background:linear-gradient(#e9ebee,#d9dce0);border-left:1px solid #b3b8bf;box-sizing:border-box;"></div>
<svg style="position:absolute;left:1065px;top:152px" width="7" height="5" viewBox="0 0 7 5"><path d="M0.5 0.5 L3.5 3.5 L6.5 0.5" fill="none" stroke="#55595f" stroke-width="1.5"/></svg>
<div style="position:absolute;left:9px;top:165px;width:1063px;height:1px;background:#a3a8ae;"></div>
<div style="position:absolute;left:9px;top:166px;width:1063px;height:3px;background:linear-gradient(#fdfdfe,#eef0f5);"></div>
<div style="position:absolute;left:8px;top:169px;width:1064px;height:1px;background:#90969d;"></div>
<div style="position:absolute;left:9px;top:170px;width:1052px;height:16px;background:linear-gradient(#e5e8ec,#dfe2e7);"></div>
<svg style="position:absolute;left:22px;top:175px" width="9" height="9" viewBox="0 0 9 9"><path d="M8.5 0.5 L8.5 8.5 L0.5 8.5 Z" fill="#b9bdc3"/></svg>
<div style="position:absolute;left:9px;top:187px;width:25px;height:629px;background:#e0e4e9;"></div>
<div style="position:absolute;left:8px;top:170px;width:1px;height:663px;background:#8f949b;"></div>
<div style="position:absolute;left:35px;top:187px;width:1026px;height:629px;background:#fff;"></div>
<div style="position:absolute;left:35px;top:203px;width:1026px;height:1px;background:#d8d9da;"></div>
<div style="position:absolute;left:9px;top:203px;width:25px;height:1px;background:#b4b8be;"></div>
<div style="position:absolute;left:35px;top:220px;width:1026px;height:1px;background:#d8d9da;"></div>
<div style="position:absolute;left:9px;top:220px;width:25px;height:1px;background:#b4b8be;"></div>
<div style="position:absolute;left:35px;top:237px;width:1026px;height:1px;background:#d8d9da;"></div>
<div style="position:absolute;left:9px;top:237px;width:25px;height:1px;background:#b4b8be;"></div>
<div style="position:absolute;left:35px;top:254px;width:1026px;height:1px;background:#d8d9da;"></div>
<div style="position:absolute;left:9px;top:254px;width:25px;height:1px;background:#b4b8be;"></div>
<div style="position:absolute;left:35px;top:271px;width:1026px;height:1px;background:#d8d9da;"></div>
<div style="position:absolute;left:9px;top:271px;width:25px;height:1px;background:#b4b8be;"></div>
<div style="position:absolute;left:35px;top:288px;width:1026px;height:1px;background:#d8d9da;"></div>
<div style="position:absolute;left:9px;top:288px;width:25px;height:1px;background:#b4b8be;"></div>
<div style="position:absolute;left:35px;top:305px;width:1026px;height:1px;background:#d8d9da;"></div>
<div style="position:absolute;left:9px;top:305px;width:25px;height:1px;background:#b4b8be;"></div>
<div style="position:absolute;left:35px;top:322px;width:1026px;height:1px;background:#d8d9da;"></div>
<div style="position:absolute;left:9px;top:322px;width:25px;height:1px;background:#b4b8be;"></div>
<div style="position:absolute;left:35px;top:339px;width:1026px;height:1px;background:#d8d9da;"></div>
<div style="position:absolute;left:9px;top:339px;width:25px;height:1px;background:#b4b8be;"></div>
<div style="position:absolute;left:35px;top:356px;width:1026px;height:1px;background:#d8d9da;"></div>
<div style="position:absolute;left:9px;top:356px;width:25px;height:1px;background:#b4b8be;"></div>
<div style="position:absolute;left:35px;top:373px;width:1026px;height:1px;background:#d8d9da;"></div>
<div style="position:absolute;left:9px;top:373px;width:25px;height:1px;background:#b4b8be;"></div>
<div style="position:absolute;left:35px;top:390px;width:1026px;height:1px;background:#d8d9da;"></div>
<div style="position:absolute;left:9px;top:390px;width:25px;height:1px;background:#b4b8be;"></div>
<div style="position:absolute;left:35px;top:407px;width:1026px;height:1px;background:#d8d9da;"></div>
<div style="position:absolute;left:9px;top:407px;width:25px;height:1px;background:#b4b8be;"></div>
<div style="position:absolute;left:35px;top:424px;width:1026px;height:1px;background:#d8d9da;"></div>
<div style="position:absolute;left:9px;top:424px;width:25px;height:1px;background:#b4b8be;"></div>
<div style="position:absolute;left:35px;top:441px;width:1026px;height:1px;background:#d8d9da;"></div>
<div style="position:absolute;left:9px;top:441px;width:25px;height:1px;background:#b4b8be;"></div>
<div style="position:absolute;left:35px;top:458px;width:1026px;height:1px;background:#d8d9da;"></div>
<div style="position:absolute;left:9px;top:458px;width:25px;height:1px;background:#b4b8be;"></div>
<div style="position:absolute;left:35px;top:475px;width:1026px;height:1px;background:#d8d9da;"></div>
<div style="position:absolute;left:9px;top:475px;width:25px;height:1px;background:#b4b8be;"></div>
<div style="position:absolute;left:35px;top:492px;width:1026px;height:1px;background:#d8d9da;"></div>
<div style="position:absolute;left:9px;top:492px;width:25px;height:1px;background:#b4b8be;"></div>
<div style="position:absolute;left:35px;top:509px;width:1026px;height:1px;background:#d8d9da;"></div>
<div style="position:absolute;left:9px;top:509px;width:25px;height:1px;background:#b4b8be;"></div>
<div style="position:absolute;left:35px;top:526px;width:1026px;height:1px;background:#d8d9da;"></div>
<div style="position:absolute;left:9px;top:526px;width:25px;height:1px;background:#b4b8be;"></div>
<div style="position:absolute;left:35px;top:543px;width:1026px;height:1px;background:#d8d9da;"></div>
<div style="position:absolute;left:9px;top:543px;width:25px;height:1px;background:#b4b8be;"></div>
<div style="position:absolute;left:35px;top:560px;width:1026px;height:1px;background:#d8d9da;"></div>
<div style="position:absolute;left:9px;top:560px;width:25px;height:1px;background:#b4b8be;"></div>
<div style="position:absolute;left:35px;top:577px;width:1026px;height:1px;background:#d8d9da;"></div>
<div style="position:absolute;left:9px;top:577px;width:25px;height:1px;background:#b4b8be;"></div>
<div style="position:absolute;left:35px;top:594px;width:1026px;height:1px;background:#d8d9da;"></div>
<div style="position:absolute;left:9px;top:594px;width:25px;height:1px;background:#b4b8be;"></div>
<div style="position:absolute;left:35px;top:611px;width:1026px;height:1px;background:#d8d9da;"></div>
<div style="position:absolute;left:9px;top:611px;width:25px;height:1px;background:#b4b8be;"></div>
<div style="position:absolute;left:35px;top:628px;width:1026px;height:1px;background:#d8d9da;"></div>
<div style="position:absolute;left:9px;top:628px;width:25px;height:1px;background:#b4b8be;"></div>
<div style="position:absolute;left:35px;top:645px;width:1026px;height:1px;background:#d8d9da;"></div>
<div style="position:absolute;left:9px;top:645px;width:25px;height:1px;background:#b4b8be;"></div>
<div style="position:absolute;left:35px;top:662px;width:1026px;height:1px;background:#d8d9da;"></div>
<div style="position:absolute;left:9px;top:662px;width:25px;height:1px;background:#b4b8be;"></div>
<div style="position:absolute;left:35px;top:679px;width:1026px;height:1px;background:#d8d9da;"></div>
<div style="position:absolute;left:9px;top:679px;width:25px;height:1px;background:#b4b8be;"></div>
<div style="position:absolute;left:35px;top:696px;width:1026px;height:1px;background:#d8d9da;"></div>
<div style="position:absolute;left:9px;top:696px;width:25px;height:1px;background:#b4b8be;"></div>
<div style="position:absolute;left:35px;top:713px;width:1026px;height:1px;background:#d8d9da;"></div>
<div style="position:absolute;left:9px;top:713px;width:25px;height:1px;background:#b4b8be;"></div>
<div style="position:absolute;left:35px;top:730px;width:1026px;height:1px;background:#d8d9da;"></div>
<div style="position:absolute;left:9px;top:730px;width:25px;height:1px;background:#b4b8be;"></div>
<div style="position:absolute;left:35px;top:747px;width:1026px;height:1px;background:#d8d9da;"></div>
<div style="position:absolute;left:9px;top:747px;width:25px;height:1px;background:#b4b8be;"></div>
<div style="position:absolute;left:35px;top:764px;width:1026px;height:1px;background:#d8d9da;"></div>
<div style="position:absolute;left:9px;top:764px;width:25px;height:1px;background:#b4b8be;"></div>
<div style="position:absolute;left:35px;top:781px;width:1026px;height:1px;background:#d8d9da;"></div>
<div style="position:absolute;left:9px;top:781px;width:25px;height:1px;background:#b4b8be;"></div>
<div style="position:absolute;left:35px;top:798px;width:1026px;height:1px;background:#d8d9da;"></div>
<div style="position:absolute;left:9px;top:798px;width:25px;height:1px;background:#b4b8be;"></div>
<div style="position:absolute;left:35px;top:815px;width:1026px;height:1px;background:#d8d9da;"></div>
<div style="position:absolute;left:9px;top:815px;width:25px;height:1px;background:#b4b8be;"></div>
<div style="position:absolute;left:180px;top:187px;width:1px;height:629px;background:#d8d9da;"></div>
<div style="position:absolute;left:180px;top:170px;width:1px;height:16px;background:#b4b8be;"></div>
<div style="position:absolute;left:257px;top:187px;width:1px;height:629px;background:#d8d9da;"></div>
<div style="position:absolute;left:257px;top:170px;width:1px;height:16px;background:#b4b8be;"></div>
<div style="position:absolute;left:344px;top:187px;width:1px;height:629px;background:#d8d9da;"></div>
<div style="position:absolute;left:344px;top:170px;width:1px;height:16px;background:#b4b8be;"></div>
<div style="position:absolute;left:408px;top:187px;width:1px;height:629px;background:#d8d9da;"></div>
<div style="position:absolute;left:408px;top:170px;width:1px;height:16px;background:#b4b8be;"></div>
<div style="position:absolute;left:472px;top:187px;width:1px;height:629px;background:#d8d9da;"></div>
<div style="position:absolute;left:472px;top:170px;width:1px;height:16px;background:#b4b8be;"></div>
<div style="position:absolute;left:536px;top:187px;width:1px;height:629px;background:#d8d9da;"></div>
<div style="position:absolute;left:536px;top:170px;width:1px;height:16px;background:#b4b8be;"></div>
<div style="position:absolute;left:600px;top:187px;width:1px;height:629px;background:#d8d9da;"></div>
<div style="position:absolute;left:600px;top:170px;width:1px;height:16px;background:#b4b8be;"></div>
<div style="position:absolute;left:664px;top:187px;width:1px;height:629px;background:#d8d9da;"></div>
<div style="position:absolute;left:664px;top:170px;width:1px;height:16px;background:#b4b8be;"></div>
<div style="position:absolute;left:728px;top:187px;width:1px;height:629px;background:#d8d9da;"></div>
<div style="position:absolute;left:728px;top:170px;width:1px;height:16px;background:#b4b8be;"></div>
<div style="position:absolute;left:792px;top:187px;width:1px;height:629px;background:#d8d9da;"></div>
<div style="position:absolute;left:792px;top:170px;width:1px;height:16px;background:#b4b8be;"></div>
<div style="position:absolute;left:856px;top:187px;width:1px;height:629px;background:#d8d9da;"></div>
<div style="position:absolute;left:856px;top:170px;width:1px;height:16px;background:#b4b8be;"></div>
<div style="position:absolute;left:920px;top:187px;width:1px;height:629px;background:#d8d9da;"></div>
<div style="position:absolute;left:920px;top:170px;width:1px;height:16px;background:#b4b8be;"></div>
<div style="position:absolute;left:984px;top:187px;width:1px;height:629px;background:#d8d9da;"></div>
<div style="position:absolute;left:984px;top:170px;width:1px;height:16px;background:#b4b8be;"></div>
<div style="position:absolute;left:1048px;top:187px;width:1px;height:629px;background:#d8d9da;"></div>
<div style="position:absolute;left:1048px;top:170px;width:1px;height:16px;background:#b4b8be;"></div>
<div style="position:absolute;left:34px;top:170px;width:1px;height:646px;background:#9da2a9;"></div>
<div style="position:absolute;left:9px;top:186px;width:1052px;height:1px;background:#9da2a9;"></div>
<div style="position:absolute;left:35px;top:170px;width:145px;height:16px;background:linear-gradient(#f8d46a,#fde576);"></div>
<div style="position:absolute;left:35px;top:186px;width:146px;height:1px;background:#e3a23a;"></div>
<div style="position:absolute;left:180px;top:170px;width:1px;height:16px;background:#e3a23a;"></div>
<div style="position:absolute;left:9px;top:187px;width:25px;height:16px;background:linear-gradient(#f8d46a,#fde576);"></div>
<div style="position:absolute;left:34px;top:170px;width:1px;height:34px;background:#e3a23a;"></div>
<div style="position:absolute;left:9px;top:186px;width:26px;height:1px;background:#e3a23a;"></div>
<div style="position:absolute;left:9px;top:203px;width:26px;height:1px;background:#e3a23a;"></div>
<div style="position:absolute;left:35px;top:170px;width:146px;text-align:center;white-space:nowrap;font:13px 'Liberation Sans', sans-serif;color:#3a3e46;transform:scale(1.06,1.1);transform-origin:50% 12.5px;margin-top:1px;line-height:16px;">A</div>
<div style="position:absolute;left:181px;top:170px;width:77px;text-align:center;white-space:nowrap;font:13px 'Liberation Sans', sans-serif;color:#3a3e46;transform:scale(1.06,1.1);transform-origin:50% 12.5px;margin-top:1px;line-height:16px;">B</div>
<div style="position:absolute;left:258px;top:170px;width:87px;text-align:center;white-space:nowrap;font:13px 'Liberation Sans', sans-serif;color:#3a3e46;transform:scale(1.06,1.1);transform-origin:50% 12.5px;margin-top:1px;line-height:16px;">C</div>
<div style="position:absolute;left:345px;top:170px;width:64px;text-align:center;white-space:nowrap;font:13px 'Liberation Sans', sans-serif;color:#3a3e46;transform:scale(1.06,1.1);transform-origin:50% 12.5px;margin-top:1px;line-height:16px;">D</div>
<div style="position:absolute;left:409px;top:170px;width:64px;text-align:center;white-space:nowrap;font:13px 'Liberation Sans', sans-serif;color:#3a3e46;transform:scale(1.06,1.1);transform-origin:50% 12.5px;margin-top:1px;line-height:16px;">E</div>
<div style="position:absolute;left:473px;top:170px;width:64px;text-align:center;white-space:nowrap;font:13px 'Liberation Sans', sans-serif;color:#3a3e46;transform:scale(1.06,1.1);transform-origin:50% 12.5px;margin-top:1px;line-height:16px;">F</div>
<div style="position:absolute;left:537px;top:170px;width:64px;text-align:center;white-space:nowrap;font:13px 'Liberation Sans', sans-serif;color:#3a3e46;transform:scale(1.06,1.1);transform-origin:50% 12.5px;margin-top:1px;line-height:16px;">G</div>
<div style="position:absolute;left:601px;top:170px;width:64px;text-align:center;white-space:nowrap;font:13px 'Liberation Sans', sans-serif;color:#3a3e46;transform:scale(1.06,1.1);transform-origin:50% 12.5px;margin-top:1px;line-height:16px;">H</div>
<div style="position:absolute;left:665px;top:170px;width:64px;text-align:center;white-space:nowrap;font:13px 'Liberation Sans', sans-serif;color:#3a3e46;transform:scale(1.06,1.1);transform-origin:50% 12.5px;margin-top:1px;line-height:16px;">I</div>
<div style="position:absolute;left:729px;top:170px;width:64px;text-align:center;white-space:nowrap;font:13px 'Liberation Sans', sans-serif;color:#3a3e46;transform:scale(1.06,1.1);transform-origin:50% 12.5px;margin-top:1px;line-height:16px;">J</div>
<div style="position:absolute;left:793px;top:170px;width:64px;text-align:center;white-space:nowrap;font:13px 'Liberation Sans', sans-serif;color:#3a3e46;transform:scale(1.06,1.1);transform-origin:50% 12.5px;margin-top:1px;line-height:16px;">K</div>
<div style="position:absolute;left:857px;top:170px;width:64px;text-align:center;white-space:nowrap;font:13px 'Liberation Sans', sans-serif;color:#3a3e46;transform:scale(1.06,1.1);transform-origin:50% 12.5px;margin-top:1px;line-height:16px;">L</div>
<div style="position:absolute;left:921px;top:170px;width:64px;text-align:center;white-space:nowrap;font:13px 'Liberation Sans', sans-serif;color:#3a3e46;transform:scale(1.06,1.1);transform-origin:50% 12.5px;margin-top:1px;line-height:16px;">M</div>
<div style="position:absolute;left:985px;top:170px;width:64px;text-align:center;white-space:nowrap;font:13px 'Liberation Sans', sans-serif;color:#3a3e46;transform:scale(1.06,1.1);transform-origin:50% 12.5px;margin-top:1px;line-height:16px;">N</div>
<div style="position:absolute;left:9px;top:187px;width:25px;text-align:center;white-space:nowrap;font:13px 'Liberation Sans', sans-serif;color:#3a3e46;transform:scale(1.06,1.1);transform-origin:50% 12.5px;margin-top:1px;line-height:16px;">1</div>
<div style="position:absolute;left:9px;top:204px;width:25px;text-align:center;white-space:nowrap;font:13px 'Liberation Sans', sans-serif;color:#3a3e46;transform:scale(1.06,1.1);transform-origin:50% 12.5px;margin-top:1px;line-height:16px;">2</div>
<div style="position:absolute;left:9px;top:221px;width:25px;text-align:center;white-space:nowrap;font:13px 'Liberation Sans', sans-serif;color:#3a3e46;transform:scale(1.06,1.1);transform-origin:50% 12.5px;margin-top:1px;line-height:16px;">3</div>
<div style="position:absolute;left:9px;top:238px;width:25px;text-align:center;white-space:nowrap;font:13px 'Liberation Sans', sans-serif;color:#3a3e46;transform:scale(1.06,1.1);transform-origin:50% 12.5px;margin-top:1px;line-height:16px;">4</div>
<div style="position:absolute;left:9px;top:255px;width:25px;text-align:center;white-space:nowrap;font:13px 'Liberation Sans', sans-serif;color:#3a3e46;transform:scale(1.06,1.1);transform-origin:50% 12.5px;margin-top:1px;line-height:16px;">5</div>
<div style="position:absolute;left:9px;top:272px;width:25px;text-align:center;white-space:nowrap;font:13px 'Liberation Sans', sans-serif;color:#3a3e46;transform:scale(1.06,1.1);transform-origin:50% 12.5px;margin-top:1px;line-height:16px;">6</div>
<div style="position:absolute;left:9px;top:289px;width:25px;text-align:center;white-space:nowrap;font:13px 'Liberation Sans', sans-serif;color:#3a3e46;transform:scale(1.06,1.1);transform-origin:50% 12.5px;margin-top:1px;line-height:16px;">7</div>
<div style="position:absolute;left:9px;top:306px;width:25px;text-align:center;white-space:nowrap;font:13px 'Liberation Sans', sans-serif;color:#3a3e46;transform:scale(1.06,1.1);transform-origin:50% 12.5px;margin-top:1px;line-height:16px;">8</div>
<div style="position:absolute;left:9px;top:323px;width:25px;text-align:center;white-space:nowrap;font:13px 'Liberation Sans', sans-serif;color:#3a3e46;transform:scale(1.06,1.1);transform-origin:50% 12.5px;margin-top:1px;line-height:16px;">9</div>
<div style="position:absolute;left:9px;top:340px;width:25px;text-align:center;white-space:nowrap;font:13px 'Liberation Sans', sans-serif;color:#3a3e46;transform:scale(1.06,1.1);transform-origin:50% 12.5px;margin-top:1px;line-height:16px;">10</div>
<div style="position:absolute;left:9px;top:357px;width:25px;text-align:center;white-space:nowrap;font:13px 'Liberation Sans', sans-serif;color:#3a3e46;transform:scale(1.06,1.1);transform-origin:50% 12.5px;margin-top:1px;line-height:16px;">11</div>
<div style="position:absolute;left:9px;top:374px;width:25px;text-align:center;white-space:nowrap;font:13px 'Liberation Sans', sans-serif;color:#3a3e46;transform:scale(1.06,1.1);transform-origin:50% 12.5px;margin-top:1px;line-height:16px;">12</div>
<div style="position:absolute;left:9px;top:391px;width:25px;text-align:center;white-space:nowrap;font:13px 'Liberation Sans', sans-serif;color:#3a3e46;transform:scale(1.06,1.1);transform-origin:50% 12.5px;margin-top:1px;line-height:16px;">13</div>
<div style="position:absolute;left:9px;top:408px;width:25px;text-align:center;white-space:nowrap;font:13px 'Liberation Sans', sans-serif;color:#3a3e46;transform:scale(1.06,1.1);transform-origin:50% 12.5px;margin-top:1px;line-height:16px;">14</div>
<div style="position:absolute;left:9px;top:425px;width:25px;text-align:center;white-space:nowrap;font:13px 'Liberation Sans', sans-serif;color:#3a3e46;transform:scale(1.06,1.1);transform-origin:50% 12.5px;margin-top:1px;line-height:16px;">15</div>
<div style="position:absolute;left:9px;top:442px;width:25px;text-align:center;white-space:nowrap;font:13px 'Liberation Sans', sans-serif;color:#3a3e46;transform:scale(1.06,1.1);transform-origin:50% 12.5px;margin-top:1px;line-height:16px;">16</div>
<div style="position:absolute;left:9px;top:459px;width:25px;text-align:center;white-space:nowrap;font:13px 'Liberation Sans', sans-serif;color:#3a3e46;transform:scale(1.06,1.1);transform-origin:50% 12.5px;margin-top:1px;line-height:16px;">17</div>
<div style="position:absolute;left:9px;top:476px;width:25px;text-align:center;white-space:nowrap;font:13px 'Liberation Sans', sans-serif;color:#3a3e46;transform:scale(1.06,1.1);transform-origin:50% 12.5px;margin-top:1px;line-height:16px;">18</div>
<div style="position:absolute;left:9px;top:493px;width:25px;text-align:center;white-space:nowrap;font:13px 'Liberation Sans', sans-serif;color:#3a3e46;transform:scale(1.06,1.1);transform-origin:50% 12.5px;margin-top:1px;line-height:16px;">19</div>
<div style="position:absolute;left:9px;top:510px;width:25px;text-align:center;white-space:nowrap;font:13px 'Liberation Sans', sans-serif;color:#3a3e46;transform:scale(1.06,1.1);transform-origin:50% 12.5px;margin-top:1px;line-height:16px;">20</div>
<div style="position:absolute;left:9px;top:527px;width:25px;text-align:center;white-space:nowrap;font:13px 'Liberation Sans', sans-serif;color:#3a3e46;transform:scale(1.06,1.1);transform-origin:50% 12.5px;margin-top:1px;line-height:16px;">21</div>
<div style="position:absolute;left:9px;top:544px;width:25px;text-align:center;white-space:nowrap;font:13px 'Liberation Sans', sans-serif;color:#3a3e46;transform:scale(1.06,1.1);transform-origin:50% 12.5px;margin-top:1px;line-height:16px;">22</div>
<div style="position:absolute;left:9px;top:561px;width:25px;text-align:center;white-space:nowrap;font:13px 'Liberation Sans', sans-serif;color:#3a3e46;transform:scale(1.06,1.1);transform-origin:50% 12.5px;margin-top:1px;line-height:16px;">23</div>
<div style="position:absolute;left:9px;top:578px;width:25px;text-align:center;white-space:nowrap;font:13px 'Liberation Sans', sans-serif;color:#3a3e46;transform:scale(1.06,1.1);transform-origin:50% 12.5px;margin-top:1px;line-height:16px;">24</div>
<div style="position:absolute;left:9px;top:595px;width:25px;text-align:center;white-space:nowrap;font:13px 'Liberation Sans', sans-serif;color:#3a3e46;transform:scale(1.06,1.1);transform-origin:50% 12.5px;margin-top:1px;line-height:16px;">25</div>
<div style="position:absolute;left:9px;top:612px;width:25px;text-align:center;white-space:nowrap;font:13px 'Liberation Sans', sans-serif;color:#3a3e46;transform:scale(1.06,1.1);transform-origin:50% 12.5px;margin-top:1px;line-height:16px;">26</div>
<div style="position:absolute;left:9px;top:629px;width:25px;text-align:center;white-space:nowrap;font:13px 'Liberation Sans', sans-serif;color:#3a3e46;transform:scale(1.06,1.1);transform-origin:50% 12.5px;margin-top:1px;line-height:16px;">27</div>
<div style="position:absolute;left:9px;top:646px;width:25px;text-align:center;white-space:nowrap;font:13px 'Liberation Sans', sans-serif;color:#3a3e46;transform:scale(1.06,1.1);transform-origin:50% 12.5px;margin-top:1px;line-height:16px;">28</div>
<div style="position:absolute;left:9px;top:663px;width:25px;text-align:center;white-space:nowrap;font:13px 'Liberation Sans', sans-serif;color:#3a3e46;transform:scale(1.06,1.1);transform-origin:50% 12.5px;margin-top:1px;line-height:16px;">29</div>
<div style="position:absolute;left:9px;top:680px;width:25px;text-align:center;white-space:nowrap;font:13px 'Liberation Sans', sans-serif;color:#3a3e46;transform:scale(1.06,1.1);transform-origin:50% 12.5px;margin-top:1px;line-height:16px;">30</div>
<div style="position:absolute;left:9px;top:697px;width:25px;text-align:center;white-space:nowrap;font:13px 'Liberation Sans', sans-serif;color:#3a3e46;transform:scale(1.06,1.1);transform-origin:50% 12.5px;margin-top:1px;line-height:16px;">31</div>
<div style="position:absolute;left:9px;top:714px;width:25px;text-align:center;white-space:nowrap;font:13px 'Liberation Sans', sans-serif;color:#3a3e46;transform:scale(1.06,1.1);transform-origin:50% 12.5px;margin-top:1px;line-height:16px;">32</div>
<div style="position:absolute;left:9px;top:731px;width:25px;text-align:center;white-space:nowrap;font:13px 'Liberation Sans', sans-serif;color:#3a3e46;transform:scale(1.06,1.1);transform-origin:50% 12.5px;margin-top:1px;line-height:16px;">33</div>
<div style="position:absolute;left:9px;top:748px;width:25px;text-align:center;white-space:nowrap;font:13px 'Liberation Sans', sans-serif;color:#3a3e46;transform:scale(1.06,1.1);transform-origin:50% 12.5px;margin-top:1px;line-height:16px;">34</div>
<div style="position:absolute;left:9px;top:765px;width:25px;text-align:center;white-space:nowrap;font:13px 'Liberation Sans', sans-serif;color:#3a3e46;transform:scale(1.06,1.1);transform-origin:50% 12.5px;margin-top:1px;line-height:16px;">35</div>
<div style="position:absolute;left:9px;top:782px;width:25px;text-align:center;white-space:nowrap;font:13px 'Liberation Sans', sans-serif;color:#3a3e46;transform:scale(1.06,1.1);transform-origin:50% 12.5px;margin-top:1px;line-height:16px;">36</div>
<div style="position:absolute;left:9px;top:799px;width:25px;text-align:center;white-space:nowrap;font:13px 'Liberation Sans', sans-serif;color:#3a3e46;transform:scale(1.06,1.1);transform-origin:50% 12.5px;margin-top:1px;line-height:16px;">37</div>
<div style="position:absolute;left:472px;top:187px;width:1px;height:16px;background:#fff;"></div>
<div style="position:absolute;left:536px;top:187px;width:1px;height:16px;background:#fff;"></div>
<div style="position:absolute;left:600px;top:187px;width:1px;height:16px;background:#fff;"></div>
<div style="position:absolute;left:664px;top:187px;width:1px;height:16px;background:#fff;"></div>
<div style="position:absolute;left:536px;top:204px;width:1px;height:16px;background:#fff;"></div>
<div style="position:absolute;left:600px;top:204px;width:1px;height:16px;background:#fff;"></div>
<div style="position:absolute;left:536px;top:221px;width:1px;height:16px;background:#fff;"></div>
<div style="position:absolute;left:600px;top:221px;width:1px;height:16px;background:#fff;"></div>
<div style="position:absolute;left:536px;top:255px;width:1px;height:16px;background:#fff;"></div>
<div style="position:absolute;left:600px;top:255px;width:1px;height:16px;background:#fff;"></div>
<div style="position:absolute;left:536px;top:272px;width:1px;height:16px;background:#fff;"></div>
<div style="position:absolute;left:600px;top:272px;width:1px;height:16px;background:#fff;"></div>
<div style="position:absolute;left:268.0px;top:187px;width:600px;text-align:center;white-space:nowrap;font-family:'Liberation Sans', sans-serif;font-size:13px;line-height:16px;color:#000;transform:scaleY(1.08);transform-origin:0 12.5px;margin-top:1px;font-weight:bold;letter-spacing:0.12px;">Job<span style="letter-spacing:-0.2px">:</span> Montessori School Sitewor</div>
<div style="position:absolute;left:268.0px;top:204px;width:600px;text-align:center;white-space:nowrap;font-family:'Liberation Sans', sans-serif;font-size:13px;line-height:16px;color:#000;transform:scaleY(1.08);transform-origin:0 12.5px;margin-top:1px;font-weight:bold;letter-spacing:0.12px;">Units<span style="letter-spacing:-0.2px">:</span> Ft-CY</div>
<div style="position:absolute;left:268.0px;top:221px;width:600px;text-align:center;white-space:nowrap;font-family:'Liberation Sans', sans-serif;font-size:13px;line-height:16px;color:#000;transform:scaleY(1.08);transform-origin:0 12.5px;margin-top:1px;font-weight:bold;letter-spacing:0.12px;">Thu Aug <span style="letter-spacing:-0.2px">06,</span> <span style="letter-spacing:-0.2px">2015</span> <span style="letter-spacing:-0.2px">12:59:57</span></div>
<div style="position:absolute;left:268.0px;top:255px;width:600px;text-align:center;white-space:nowrap;font-family:'Liberation Sans', sans-serif;font-size:13px;line-height:16px;color:#000;transform:scaleY(1.08);transform-origin:0 12.5px;margin-top:1px;font-weight:bold;letter-spacing:0.12px;">Volume Report</div>
<div style="position:absolute;left:268.0px;top:272px;width:600px;text-align:center;white-space:nowrap;font-family:'Liberation Sans', sans-serif;font-size:13px;line-height:16px;color:#000;transform:scaleY(1.08);transform-origin:0 12.5px;margin-top:1px;font-weight:bold;letter-spacing:0.12px;">Subgrade vs<span style="letter-spacing:-0.2px">.</span> Stripped</div>
<div style="position:absolute;left:472px;top:288px;width:193px;height:1px;background:#000;"></div>
<div style="position:absolute;left:35px;top:306px;width:1013px;height:33px;background:#c0c0c0;"></div>
<div style="position:absolute;left:35px;top:305px;width:1014px;height:1px;background:#000;"></div>
<div style="position:absolute;left:35px;top:339px;width:1014px;height:1px;background:#000;"></div>
<div style="position:absolute;left:1048px;top:305px;width:1px;height:35px;background:#000;"></div>
<div style="position:absolute;left:140.0px;top:306px;width:600px;text-align:center;white-space:nowrap;font-family:'Liberation Sans', sans-serif;font-size:13px;line-height:16px;color:#000;transform:scaleY(1.08);transform-origin:0 12.5px;margin-top:1px;font-weight:bold;letter-spacing:0.12px;">Area</div>
<div style="position:absolute;left:300.0px;top:306px;width:600px;text-align:center;white-space:nowrap;font-family:'Liberation Sans', sans-serif;font-size:13px;line-height:16px;color:#000;transform:scaleY(1.08);transform-origin:0 12.5px;margin-top:1px;font-weight:bold;letter-spacing:0.12px;">Volume</div>
<div style="position:absolute;left:428.0px;top:306px;width:600px;text-align:center;white-space:nowrap;font-family:'Liberation Sans', sans-serif;font-size:13px;line-height:16px;color:#000;transform:scaleY(1.08);transform-origin:0 12.5px;margin-top:1px;font-weight:bold;letter-spacing:0.12px;">Comp/Ratio</div>
<div style="position:absolute;left:556.0px;top:306px;width:600px;text-align:center;white-space:nowrap;font-family:'Liberation Sans', sans-serif;font-size:13px;line-height:16px;color:#000;transform:scaleY(1.08);transform-origin:0 12.5px;margin-top:1px;font-weight:bold;letter-spacing:0.12px;">Compact</div>
<div style="position:absolute;left:721px;top:306px;width:261px;text-align:right;white-space:nowrap;font-family:'Liberation Sans', sans-serif;font-size:13px;line-height:16px;color:#000;transform:scaleY(1.08);transform-origin:0 12.5px;margin-top:1px;font-weight:bold;letter-spacing:0.12px;">Export</div>
<div style="position:absolute;left:785px;top:306px;width:261px;text-align:right;white-space:nowrap;font-family:'Liberation Sans', sans-serif;font-size:13px;line-height:16px;color:#000;transform:scaleY(1.08);transform-origin:0 12.5px;margin-top:1px;font-weight:bold;letter-spacing:0.12px;">Change</div>
<div style="position:absolute;left:58px;top:323px;width:284px;text-align:right;white-space:nowrap;font-family:'Liberation Sans', sans-serif;font-size:13px;line-height:16px;color:#000;transform:scaleY(1.08);transform-origin:0 12.5px;margin-top:1px;font-weight:bold;letter-spacing:0.12px;">Total</div>
<div style="position:absolute;left:145px;top:323px;width:261px;text-align:right;white-space:nowrap;font-family:'Liberation Sans', sans-serif;font-size:13px;line-height:16px;color:#000;transform:scaleY(1.08);transform-origin:0 12.5px;margin-top:1px;font-weight:bold;letter-spacing:0.12px;">Cut</div>
<div style="position:absolute;left:209px;top:323px;width:261px;text-align:right;white-space:nowrap;font-family:'Liberation Sans', sans-serif;font-size:13px;line-height:16px;color:#000;transform:scaleY(1.08);transform-origin:0 12.5px;margin-top:1px;font-weight:bold;letter-spacing:0.12px;">Fill</div>
<div style="position:absolute;left:273px;top:323px;width:261px;text-align:right;white-space:nowrap;font-family:'Liberation Sans', sans-serif;font-size:13px;line-height:16px;color:#000;transform:scaleY(1.08);transform-origin:0 12.5px;margin-top:1px;font-weight:bold;letter-spacing:0.12px;">OnGrade</div>
<div style="position:absolute;left:337px;top:323px;width:261px;text-align:right;white-space:nowrap;font-family:'Liberation Sans', sans-serif;font-size:13px;line-height:16px;color:#000;transform:scaleY(1.08);transform-origin:0 12.5px;margin-top:1px;font-weight:bold;letter-spacing:0.12px;">Cut</div>
<div style="position:absolute;left:401px;top:323px;width:261px;text-align:right;white-space:nowrap;font-family:'Liberation Sans', sans-serif;font-size:13px;line-height:16px;color:#000;transform:scaleY(1.08);transform-origin:0 12.5px;margin-top:1px;font-weight:bold;letter-spacing:0.12px;">Fill</div>
<div style="position:absolute;left:465px;top:323px;width:261px;text-align:right;white-space:nowrap;font-family:'Liberation Sans', sans-serif;font-size:13px;line-height:16px;color:#000;transform:scaleY(1.08);transform-origin:0 12.5px;margin-top:1px;font-weight:bold;letter-spacing:0.12px;">Cut</div>
<div style="position:absolute;left:529px;top:323px;width:261px;text-align:right;white-space:nowrap;font-family:'Liberation Sans', sans-serif;font-size:13px;line-height:16px;color:#000;transform:scaleY(1.08);transform-origin:0 12.5px;margin-top:1px;font-weight:bold;letter-spacing:0.12px;">Fill</div>
<div style="position:absolute;left:593px;top:323px;width:261px;text-align:right;white-space:nowrap;font-family:'Liberation Sans', sans-serif;font-size:13px;line-height:16px;color:#000;transform:scaleY(1.08);transform-origin:0 12.5px;margin-top:1px;font-weight:bold;letter-spacing:0.12px;">Cut</div>
<div style="position:absolute;left:657px;top:323px;width:261px;text-align:right;white-space:nowrap;font-family:'Liberation Sans', sans-serif;font-size:13px;line-height:16px;color:#000;transform:scaleY(1.08);transform-origin:0 12.5px;margin-top:1px;font-weight:bold;letter-spacing:0.12px;">Fill</div>
<div style="position:absolute;left:721px;top:323px;width:261px;text-align:right;white-space:nowrap;font-family:'Liberation Sans', sans-serif;font-size:13px;line-height:16px;color:#000;transform:scaleY(1.08);transform-origin:0 12.5px;margin-top:1px;font-weight:bold;letter-spacing:0.12px;">-Import</div>
<div style="position:absolute;left:785px;top:323px;width:261px;text-align:right;white-space:nowrap;font-family:'Liberation Sans', sans-serif;font-size:13px;line-height:16px;color:#000;transform:scaleY(1.08);transform-origin:0 12.5px;margin-top:1px;font-weight:bold;letter-spacing:0.12px;">Per<span style="letter-spacing:-0.2px">.1</span> Ft</div>
<div style="position:absolute;left:37px;top:340px;white-space:nowrap;font-family:'Liberation Sans', sans-serif;font-size:13px;line-height:16px;color:#000;transform:scaleY(1.08);transform-origin:0 12.5px;margin-top:1px;font-weight:bold;letter-spacing:0.12px;">Building</div>
<div style="position:absolute;left:58px;top:340px;width:284px;text-align:right;white-space:nowrap;font-family:'Liberation Sans', sans-serif;font-size:13px;line-height:16px;color:#000;transform:scaleY(1.08);transform-origin:0 12.5px;margin-top:1px;letter-spacing:-0.2px;">30,805</div>
<div style="position:absolute;left:145px;top:340px;width:261px;text-align:right;white-space:nowrap;font-family:'Liberation Sans', sans-serif;font-size:13px;line-height:16px;color:#000;transform:scaleY(1.08);transform-origin:0 12.5px;margin-top:1px;letter-spacing:-0.2px;">27,083</div>
<div style="position:absolute;left:209px;top:340px;width:261px;text-align:right;white-space:nowrap;font-family:'Liberation Sans', sans-serif;font-size:13px;line-height:16px;color:#000;transform:scaleY(1.08);transform-origin:0 12.5px;margin-top:1px;letter-spacing:-0.2px;">3,459</div>
<div style="position:absolute;left:273px;top:340px;width:261px;text-align:right;white-space:nowrap;font-family:'Liberation Sans', sans-serif;font-size:13px;line-height:16px;color:#000;transform:scaleY(1.08);transform-origin:0 12.5px;margin-top:1px;letter-spacing:-0.2px;">263</div>
<div style="position:absolute;left:337px;top:340px;width:261px;text-align:right;white-space:nowrap;font-family:'Liberation Sans', sans-serif;font-size:13px;line-height:16px;color:#000;transform:scaleY(1.08);transform-origin:0 12.5px;margin-top:1px;letter-spacing:-0.2px;">7,923</div>
<div style="position:absolute;left:401px;top:340px;width:261px;text-align:right;white-space:nowrap;font-family:'Liberation Sans', sans-serif;font-size:13px;line-height:16px;color:#000;transform:scaleY(1.08);transform-origin:0 12.5px;margin-top:1px;letter-spacing:-0.2px;">237</div>
<div style="position:absolute;left:465px;top:340px;width:261px;text-align:right;white-space:nowrap;font-family:'Liberation Sans', sans-serif;font-size:13px;line-height:16px;color:#000;transform:scaleY(1.08);transform-origin:0 12.5px;margin-top:1px;letter-spacing:-0.2px;">1.00</div>
<div style="position:absolute;left:529px;top:340px;width:261px;text-align:right;white-space:nowrap;font-family:'Liberation Sans', sans-serif;font-size:13px;line-height:16px;color:#000;transform:scaleY(1.08);transform-origin:0 12.5px;margin-top:1px;letter-spacing:-0.2px;">1.15</div>
<div style="position:absolute;left:593px;top:340px;width:261px;text-align:right;white-space:nowrap;font-family:'Liberation Sans', sans-serif;font-size:13px;line-height:16px;color:#000;transform:scaleY(1.08);transform-origin:0 12.5px;margin-top:1px;letter-spacing:-0.2px;">7,923</div>
<div style="position:absolute;left:657px;top:340px;width:261px;text-align:right;white-space:nowrap;font-family:'Liberation Sans', sans-serif;font-size:13px;line-height:16px;color:#000;transform:scaleY(1.08);transform-origin:0 12.5px;margin-top:1px;letter-spacing:-0.2px;">273</div>
<div style="position:absolute;left:721px;top:340px;width:261px;text-align:right;white-space:nowrap;font-family:'Liberation Sans', sans-serif;font-size:13px;line-height:16px;color:#000;transform:scaleY(1.08);transform-origin:0 12.5px;margin-top:1px;letter-spacing:-0.2px;">7,650</div>
<div style="position:absolute;left:785px;top:340px;width:261px;text-align:right;white-space:nowrap;font-family:'Liberation Sans', sans-serif;font-size:13px;line-height:16px;color:#000;transform:scaleY(1.08);transform-origin:0 12.5px;margin-top:1px;letter-spacing:-0.2px;">131</div>
<div style="position:absolute;left:37px;top:374px;white-space:nowrap;font-family:'Liberation Sans', sans-serif;font-size:13px;line-height:16px;color:#000;transform:scaleY(1.08);transform-origin:0 12.5px;margin-top:1px;font-weight:bold;letter-spacing:0.12px;">Landscape</div>
<div style="position:absolute;left:58px;top:374px;width:284px;text-align:right;white-space:nowrap;font-family:'Liberation Sans', sans-serif;font-size:13px;line-height:16px;color:#000;transform:scaleY(1.08);transform-origin:0 12.5px;margin-top:1px;letter-spacing:-0.2px;">153,957</div>
<div style="position:absolute;left:145px;top:374px;width:261px;text-align:right;white-space:nowrap;font-family:'Liberation Sans', sans-serif;font-size:13px;line-height:16px;color:#000;transform:scaleY(1.08);transform-origin:0 12.5px;margin-top:1px;letter-spacing:-0.2px;">42,659</div>
<div style="position:absolute;left:209px;top:374px;width:261px;text-align:right;white-space:nowrap;font-family:'Liberation Sans', sans-serif;font-size:13px;line-height:16px;color:#000;transform:scaleY(1.08);transform-origin:0 12.5px;margin-top:1px;letter-spacing:-0.2px;">108,830</div>
<div style="position:absolute;left:273px;top:374px;width:261px;text-align:right;white-space:nowrap;font-family:'Liberation Sans', sans-serif;font-size:13px;line-height:16px;color:#000;transform:scaleY(1.08);transform-origin:0 12.5px;margin-top:1px;letter-spacing:-0.2px;">2,468</div>
<div style="position:absolute;left:337px;top:374px;width:261px;text-align:right;white-space:nowrap;font-family:'Liberation Sans', sans-serif;font-size:13px;line-height:16px;color:#000;transform:scaleY(1.08);transform-origin:0 12.5px;margin-top:1px;letter-spacing:-0.2px;">7,534</div>
<div style="position:absolute;left:401px;top:374px;width:261px;text-align:right;white-space:nowrap;font-family:'Liberation Sans', sans-serif;font-size:13px;line-height:16px;color:#000;transform:scaleY(1.08);transform-origin:0 12.5px;margin-top:1px;letter-spacing:-0.2px;">13,446</div>
<div style="position:absolute;left:465px;top:374px;width:261px;text-align:right;white-space:nowrap;font-family:'Liberation Sans', sans-serif;font-size:13px;line-height:16px;color:#000;transform:scaleY(1.08);transform-origin:0 12.5px;margin-top:1px;letter-spacing:-0.2px;">1.00</div>
<div style="position:absolute;left:529px;top:374px;width:261px;text-align:right;white-space:nowrap;font-family:'Liberation Sans', sans-serif;font-size:13px;line-height:16px;color:#000;transform:scaleY(1.08);transform-origin:0 12.5px;margin-top:1px;letter-spacing:-0.2px;">1.15</div>
<div style="position:absolute;left:593px;top:374px;width:261px;text-align:right;white-space:nowrap;font-family:'Liberation Sans', sans-serif;font-size:13px;line-height:16px;color:#000;transform:scaleY(1.08);transform-origin:0 12.5px;margin-top:1px;letter-spacing:-0.2px;">7,534</div>
<div style="position:absolute;left:657px;top:374px;width:261px;text-align:right;white-space:nowrap;font-family:'Liberation Sans', sans-serif;font-size:13px;line-height:16px;color:#000;transform:scaleY(1.08);transform-origin:0 12.5px;margin-top:1px;letter-spacing:-0.2px;">15,463</div>
<div style="position:absolute;left:721px;top:374px;width:261px;text-align:right;white-space:nowrap;font-family:'Liberation Sans', sans-serif;font-size:13px;line-height:16px;color:#000;transform:scaleY(1.08);transform-origin:0 12.5px;margin-top:1px;letter-spacing:-0.2px;">-7,929</div>
<div style="position:absolute;left:785px;top:374px;width:261px;text-align:right;white-space:nowrap;font-family:'Liberation Sans', sans-serif;font-size:13px;line-height:16px;color:#000;transform:scaleY(1.08);transform-origin:0 12.5px;margin-top:1px;letter-spacing:-0.2px;">656</div>
<div style="position:absolute;left:37px;top:408px;white-space:nowrap;font-family:'Liberation Sans', sans-serif;font-size:13px;line-height:16px;color:#000;transform:scaleY(1.08);transform-origin:0 12.5px;margin-top:1px;font-weight:bold;letter-spacing:0.12px;">Paving HD</div>
<div style="position:absolute;left:58px;top:408px;width:284px;text-align:right;white-space:nowrap;font-family:'Liberation Sans', sans-serif;font-size:13px;line-height:16px;color:#000;transform:scaleY(1.08);transform-origin:0 12.5px;margin-top:1px;letter-spacing:-0.2px;">14,146</div>
<div style="position:absolute;left:145px;top:408px;width:261px;text-align:right;white-space:nowrap;font-family:'Liberation Sans', sans-serif;font-size:13px;line-height:16px;color:#000;transform:scaleY(1.08);transform-origin:0 12.5px;margin-top:1px;letter-spacing:-0.2px;">6,216</div>
<div style="position:absolute;left:209px;top:408px;width:261px;text-align:right;white-space:nowrap;font-family:'Liberation Sans', sans-serif;font-size:13px;line-height:16px;color:#000;transform:scaleY(1.08);transform-origin:0 12.5px;margin-top:1px;letter-spacing:-0.2px;">7,549</div>
<div style="position:absolute;left:273px;top:408px;width:261px;text-align:right;white-space:nowrap;font-family:'Liberation Sans', sans-serif;font-size:13px;line-height:16px;color:#000;transform:scaleY(1.08);transform-origin:0 12.5px;margin-top:1px;letter-spacing:-0.2px;">381</div>
<div style="position:absolute;left:337px;top:408px;width:261px;text-align:right;white-space:nowrap;font-family:'Liberation Sans', sans-serif;font-size:13px;line-height:16px;color:#000;transform:scaleY(1.08);transform-origin:0 12.5px;margin-top:1px;letter-spacing:-0.2px;">1,128</div>
<div style="position:absolute;left:401px;top:408px;width:261px;text-align:right;white-space:nowrap;font-family:'Liberation Sans', sans-serif;font-size:13px;line-height:16px;color:#000;transform:scaleY(1.08);transform-origin:0 12.5px;margin-top:1px;letter-spacing:-0.2px;">794</div>
<div style="position:absolute;left:465px;top:408px;width:261px;text-align:right;white-space:nowrap;font-family:'Liberation Sans', sans-serif;font-size:13px;line-height:16px;color:#000;transform:scaleY(1.08);transform-origin:0 12.5px;margin-top:1px;letter-spacing:-0.2px;">1.00</div>
<div style="position:absolute;left:529px;top:408px;width:261px;text-align:right;white-space:nowrap;font-family:'Liberation Sans', sans-serif;font-size:13px;line-height:16px;color:#000;transform:scaleY(1.08);transform-origin:0 12.5px;margin-top:1px;letter-spacing:-0.2px;">1.15</div>
<div style="position:absolute;left:593px;top:408px;width:261px;text-align:right;white-space:nowrap;font-family:'Liberation Sans', sans-serif;font-size:13px;line-height:16px;color:#000;transform:scaleY(1.08);transform-origin:0 12.5px;margin-top:1px;letter-spacing:-0.2px;">1,128</div>
<div style="position:absolute;left:657px;top:408px;width:261px;text-align:right;white-space:nowrap;font-family:'Liberation Sans', sans-serif;font-size:13px;line-height:16px;color:#000;transform:scaleY(1.08);transform-origin:0 12.5px;margin-top:1px;letter-spacing:-0.2px;">913</div>
<div style="position:absolute;left:721px;top:408px;width:261px;text-align:right;white-space:nowrap;font-family:'Liberation Sans', sans-serif;font-size:13px;line-height:16px;color:#000;transform:scaleY(1.08);transform-origin:0 12.5px;margin-top:1px;letter-spacing:-0.2px;">215</div>
<div style="position:absolute;left:785px;top:408px;width:261px;text-align:right;white-space:nowrap;font-family:'Liberation Sans', sans-serif;font-size:13px;line-height:16px;color:#000;transform:scaleY(1.08);transform-origin:0 12.5px;margin-top:1px;letter-spacing:-0.2px;">60</div>
<div style="position:absolute;left:37px;top:425px;white-space:nowrap;font-family:'Liberation Sans', sans-serif;font-size:13px;line-height:16px;color:#000;transform:scaleY(1.08);transform-origin:0 12.5px;margin-top:1px;font-weight:bold;letter-spacing:0.12px;">Paving LD</div>
<div style="position:absolute;left:58px;top:425px;width:284px;text-align:right;white-space:nowrap;font-family:'Liberation Sans', sans-serif;font-size:13px;line-height:16px;color:#000;transform:scaleY(1.08);transform-origin:0 12.5px;margin-top:1px;letter-spacing:-0.2px;">24,058</div>
<div style="position:absolute;left:145px;top:425px;width:261px;text-align:right;white-space:nowrap;font-family:'Liberation Sans', sans-serif;font-size:13px;line-height:16px;color:#000;transform:scaleY(1.08);transform-origin:0 12.5px;margin-top:1px;letter-spacing:-0.2px;">1,390</div>
<div style="position:absolute;left:209px;top:425px;width:261px;text-align:right;white-space:nowrap;font-family:'Liberation Sans', sans-serif;font-size:13px;line-height:16px;color:#000;transform:scaleY(1.08);transform-origin:0 12.5px;margin-top:1px;letter-spacing:-0.2px;">22,470</div>
<div style="position:absolute;left:273px;top:425px;width:261px;text-align:right;white-space:nowrap;font-family:'Liberation Sans', sans-serif;font-size:13px;line-height:16px;color:#000;transform:scaleY(1.08);transform-origin:0 12.5px;margin-top:1px;letter-spacing:-0.2px;">198</div>
<div style="position:absolute;left:337px;top:425px;width:261px;text-align:right;white-space:nowrap;font-family:'Liberation Sans', sans-serif;font-size:13px;line-height:16px;color:#000;transform:scaleY(1.08);transform-origin:0 12.5px;margin-top:1px;letter-spacing:-0.2px;">58</div>
<div style="position:absolute;left:401px;top:425px;width:261px;text-align:right;white-space:nowrap;font-family:'Liberation Sans', sans-serif;font-size:13px;line-height:16px;color:#000;transform:scaleY(1.08);transform-origin:0 12.5px;margin-top:1px;letter-spacing:-0.2px;">2,290</div>
<div style="position:absolute;left:465px;top:425px;width:261px;text-align:right;white-space:nowrap;font-family:'Liberation Sans', sans-serif;font-size:13px;line-height:16px;color:#000;transform:scaleY(1.08);transform-origin:0 12.5px;margin-top:1px;letter-spacing:-0.2px;">1.00</div>
<div style="position:absolute;left:529px;top:425px;width:261px;text-align:right;white-space:nowrap;font-family:'Liberation Sans', sans-serif;font-size:13px;line-height:16px;color:#000;transform:scaleY(1.08);transform-origin:0 12.5px;margin-top:1px;letter-spacing:-0.2px;">1.15</div>
<div style="position:absolute;left:593px;top:425px;width:261px;text-align:right;white-space:nowrap;font-family:'Liberation Sans', sans-serif;font-size:13px;line-height:16px;color:#000;transform:scaleY(1.08);transform-origin:0 12.5px;margin-top:1px;letter-spacing:-0.2px;">58</div>
<div style="position:absolute;left:657px;top:425px;width:261px;text-align:right;white-space:nowrap;font-family:'Liberation Sans', sans-serif;font-size:13px;line-height:16px;color:#000;transform:scaleY(1.08);transform-origin:0 12.5px;margin-top:1px;letter-spacing:-0.2px;">2,634</div>
<div style="position:absolute;left:721px;top:425px;width:261px;text-align:right;white-space:nowrap;font-family:'Liberation Sans', sans-serif;font-size:13px;line-height:16px;color:#000;transform:scaleY(1.08);transform-origin:0 12.5px;margin-top:1px;letter-spacing:-0.2px;">-2,576</div>
<div style="position:absolute;left:785px;top:425px;width:261px;text-align:right;white-space:nowrap;font-family:'Liberation Sans', sans-serif;font-size:13px;line-height:16px;color:#000;transform:scaleY(1.08);transform-origin:0 12.5px;margin-top:1px;letter-spacing:-0.2px;">102</div>
<div style="position:absolute;left:37px;top:442px;white-space:nowrap;font-family:'Liberation Sans', sans-serif;font-size:13px;line-height:16px;color:#000;transform:scaleY(1.08);transform-origin:0 12.5px;margin-top:1px;font-weight:bold;letter-spacing:0.12px;">Paving LD</div>
<div style="position:absolute;left:58px;top:442px;width:284px;text-align:right;white-space:nowrap;font-family:'Liberation Sans', sans-serif;font-size:13px;line-height:16px;color:#000;transform:scaleY(1.08);transform-origin:0 12.5px;margin-top:1px;letter-spacing:-0.2px;">2,848</div>
<div style="position:absolute;left:145px;top:442px;width:261px;text-align:right;white-space:nowrap;font-family:'Liberation Sans', sans-serif;font-size:13px;line-height:16px;color:#000;transform:scaleY(1.08);transform-origin:0 12.5px;margin-top:1px;letter-spacing:-0.2px;">1,886</div>
<div style="position:absolute;left:209px;top:442px;width:261px;text-align:right;white-space:nowrap;font-family:'Liberation Sans', sans-serif;font-size:13px;line-height:16px;color:#000;transform:scaleY(1.08);transform-origin:0 12.5px;margin-top:1px;letter-spacing:-0.2px;">795</div>
<div style="position:absolute;left:273px;top:442px;width:261px;text-align:right;white-space:nowrap;font-family:'Liberation Sans', sans-serif;font-size:13px;line-height:16px;color:#000;transform:scaleY(1.08);transform-origin:0 12.5px;margin-top:1px;letter-spacing:-0.2px;">167</div>
<div style="position:absolute;left:337px;top:442px;width:261px;text-align:right;white-space:nowrap;font-family:'Liberation Sans', sans-serif;font-size:13px;line-height:16px;color:#000;transform:scaleY(1.08);transform-origin:0 12.5px;margin-top:1px;letter-spacing:-0.2px;">114</div>
<div style="position:absolute;left:401px;top:442px;width:261px;text-align:right;white-space:nowrap;font-family:'Liberation Sans', sans-serif;font-size:13px;line-height:16px;color:#000;transform:scaleY(1.08);transform-origin:0 12.5px;margin-top:1px;letter-spacing:-0.2px;">22</div>
<div style="position:absolute;left:465px;top:442px;width:261px;text-align:right;white-space:nowrap;font-family:'Liberation Sans', sans-serif;font-size:13px;line-height:16px;color:#000;transform:scaleY(1.08);transform-origin:0 12.5px;margin-top:1px;letter-spacing:-0.2px;">1.00</div>
<div style="position:absolute;left:529px;top:442px;width:261px;text-align:right;white-space:nowrap;font-family:'Liberation Sans', sans-serif;font-size:13px;line-height:16px;color:#000;transform:scaleY(1.08);transform-origin:0 12.5px;margin-top:1px;letter-spacing:-0.2px;">1.15</div>
<div style="position:absolute;left:593px;top:442px;width:261px;text-align:right;white-space:nowrap;font-family:'Liberation Sans', sans-serif;font-size:13px;line-height:16px;color:#000;transform:scaleY(1.08);transform-origin:0 12.5px;margin-top:1px;letter-spacing:-0.2px;">114</div>
<div style="position:absolute;left:657px;top:442px;width:261px;text-align:right;white-space:nowrap;font-family:'Liberation Sans', sans-serif;font-size:13px;line-height:16px;color:#000;transform:scaleY(1.08);transform-origin:0 12.5px;margin-top:1px;letter-spacing:-0.2px;">25</div>
<div style="position:absolute;left:721px;top:442px;width:261px;text-align:right;white-space:nowrap;font-family:'Liberation Sans', sans-serif;font-size:13px;line-height:16px;color:#000;transform:scaleY(1.08);transform-origin:0 12.5px;margin-top:1px;letter-spacing:-0.2px;">89</div>
<div style="position:absolute;left:785px;top:442px;width:261px;text-align:right;white-space:nowrap;font-family:'Liberation Sans', sans-serif;font-size:13px;line-height:16px;color:#000;transform:scaleY(1.08);transform-origin:0 12.5px;margin-top:1px;letter-spacing:-0.2px;">12</div>
<div style="position:absolute;left:37px;top:459px;white-space:nowrap;font-family:'Liberation Sans', sans-serif;font-size:13px;line-height:16px;color:#000;transform:scaleY(1.08);transform-origin:0 12.5px;margin-top:1px;font-weight:bold;letter-spacing:0.12px;">Paving LD</div>
<div style="position:absolute;left:58px;top:459px;width:284px;text-align:right;white-space:nowrap;font-family:'Liberation Sans', sans-serif;font-size:13px;line-height:16px;color:#000;transform:scaleY(1.08);transform-origin:0 12.5px;margin-top:1px;letter-spacing:-0.2px;">16,651</div>
<div style="position:absolute;left:145px;top:459px;width:261px;text-align:right;white-space:nowrap;font-family:'Liberation Sans', sans-serif;font-size:13px;line-height:16px;color:#000;transform:scaleY(1.08);transform-origin:0 12.5px;margin-top:1px;letter-spacing:-0.2px;">8,848</div>
<div style="position:absolute;left:209px;top:459px;width:261px;text-align:right;white-space:nowrap;font-family:'Liberation Sans', sans-serif;font-size:13px;line-height:16px;color:#000;transform:scaleY(1.08);transform-origin:0 12.5px;margin-top:1px;letter-spacing:-0.2px;">7,570</div>
<div style="position:absolute;left:273px;top:459px;width:261px;text-align:right;white-space:nowrap;font-family:'Liberation Sans', sans-serif;font-size:13px;line-height:16px;color:#000;transform:scaleY(1.08);transform-origin:0 12.5px;margin-top:1px;letter-spacing:-0.2px;">233</div>
<div style="position:absolute;left:337px;top:459px;width:261px;text-align:right;white-space:nowrap;font-family:'Liberation Sans', sans-serif;font-size:13px;line-height:16px;color:#000;transform:scaleY(1.08);transform-origin:0 12.5px;margin-top:1px;letter-spacing:-0.2px;">2,860</div>
<div style="position:absolute;left:401px;top:459px;width:261px;text-align:right;white-space:nowrap;font-family:'Liberation Sans', sans-serif;font-size:13px;line-height:16px;color:#000;transform:scaleY(1.08);transform-origin:0 12.5px;margin-top:1px;letter-spacing:-0.2px;">632</div>
<div style="position:absolute;left:465px;top:459px;width:261px;text-align:right;white-space:nowrap;font-family:'Liberation Sans', sans-serif;font-size:13px;line-height:16px;color:#000;transform:scaleY(1.08);transform-origin:0 12.5px;margin-top:1px;letter-spacing:-0.2px;">1.00</div>
<div style="position:absolute;left:529px;top:459px;width:261px;text-align:right;white-space:nowrap;font-family:'Liberation Sans', sans-serif;font-size:13px;line-height:16px;color:#000;transform:scaleY(1.08);transform-origin:0 12.5px;margin-top:1px;letter-spacing:-0.2px;">1.15</div>
<div style="position:absolute;left:593px;top:459px;width:261px;text-align:right;white-space:nowrap;font-family:'Liberation Sans', sans-serif;font-size:13px;line-height:16px;color:#000;transform:scaleY(1.08);transform-origin:0 12.5px;margin-top:1px;letter-spacing:-0.2px;">2,860</div>
<div style="position:absolute;left:657px;top:459px;width:261px;text-align:right;white-space:nowrap;font-family:'Liberation Sans', sans-serif;font-size:13px;line-height:16px;color:#000;transform:scaleY(1.08);transform-origin:0 12.5px;margin-top:1px;letter-spacing:-0.2px;">727</div>
<div style="position:absolute;left:721px;top:459px;width:261px;text-align:right;white-space:nowrap;font-family:'Liberation Sans', sans-serif;font-size:13px;line-height:16px;color:#000;transform:scaleY(1.08);transform-origin:0 12.5px;margin-top:1px;letter-spacing:-0.2px;">2,133</div>
<div style="position:absolute;left:785px;top:459px;width:261px;text-align:right;white-space:nowrap;font-family:'Liberation Sans', sans-serif;font-size:13px;line-height:16px;color:#000;transform:scaleY(1.08);transform-origin:0 12.5px;margin-top:1px;letter-spacing:-0.2px;">71</div>
<div style="position:absolute;left:-165px;top:476px;width:343px;text-align:right;white-space:nowrap;font-family:'Liberation Sans', sans-serif;font-size:13px;line-height:16px;color:#000;transform:scaleY(1.08);transform-origin:0 12.5px;margin-top:1px;font-weight:bold;letter-spacing:0.12px;">Paving Sub<span style="letter-spacing:-0.2px">:</span></div>
<div style="position:absolute;left:58px;top:476px;width:284px;text-align:right;white-space:nowrap;font-family:'Liberation Sans', sans-serif;font-size:13px;line-height:16px;color:#000;transform:scaleY(1.08);transform-origin:0 12.5px;margin-top:1px;font-weight:bold;letter-spacing:0.12px;"><span style="letter-spacing:-0.2px">57,703</span></div>
<div style="position:absolute;left:145px;top:476px;width:261px;text-align:right;white-space:nowrap;font-family:'Liberation Sans', sans-serif;font-size:13px;line-height:16px;color:#000;transform:scaleY(1.08);transform-origin:0 12.5px;margin-top:1px;font-weight:bold;letter-spacing:0.12px;"><span style="letter-spacing:-0.2px">18,340</span></div>
<div style="position:absolute;left:209px;top:476px;width:261px;text-align:right;white-space:nowrap;font-family:'Liberation Sans', sans-serif;font-size:13px;line-height:16px;color:#000;transform:scaleY(1.08);transform-origin:0 12.5px;margin-top:1px;font-weight:bold;letter-spacing:0.12px;"><span style="letter-spacing:-0.2px">38,384</span></div>
<div style="position:absolute;left:273px;top:476px;width:261px;text-align:right;white-space:nowrap;font-family:'Liberation Sans', sans-serif;font-size:13px;line-height:16px;color:#000;transform:scaleY(1.08);transform-origin:0 12.5px;margin-top:1px;font-weight:bold;letter-spacing:0.12px;"><span style="letter-spacing:-0.2px">979</span></div>
<div style="position:absolute;left:337px;top:476px;width:261px;text-align:right;white-space:nowrap;font-family:'Liberation Sans', sans-serif;font-size:13px;line-height:16px;color:#000;transform:scaleY(1.08);transform-origin:0 12.5px;margin-top:1px;font-weight:bold;letter-spacing:0.12px;"><span style="letter-spacing:-0.2px">4,160</span></div>
<div style="position:absolute;left:401px;top:476px;width:261px;text-align:right;white-space:nowrap;font-family:'Liberation Sans', sans-serif;font-size:13px;line-height:16px;color:#000;transform:scaleY(1.08);transform-origin:0 12.5px;margin-top:1px;font-weight:bold;letter-spacing:0.12px;"><span style="letter-spacing:-0.2px">3,738</span></div>
<div style="position:absolute;left:593px;top:476px;width:261px;text-align:right;white-space:nowrap;font-family:'Liberation Sans', sans-serif;font-size:13px;line-height:16px;color:#000;transform:scaleY(1.08);transform-origin:0 12.5px;margin-top:1px;font-weight:bold;letter-spacing:0.12px;"><span style="letter-spacing:-0.2px">4,160</span></div>
<div style="position:absolute;left:657px;top:476px;width:261px;text-align:right;white-space:nowrap;font-family:'Liberation Sans', sans-serif;font-size:13px;line-height:16px;color:#000;transform:scaleY(1.08);transform-origin:0 12.5px;margin-top:1px;font-weight:bold;letter-spacing:0.12px;"><span style="letter-spacing:-0.2px">4,299</span></div>
<div style="position:absolute;left:721px;top:476px;width:261px;text-align:right;white-space:nowrap;font-family:'Liberation Sans', sans-serif;font-size:13px;line-height:16px;color:#000;transform:scaleY(1.08);transform-origin:0 12.5px;margin-top:1px;font-weight:bold;letter-spacing:0.12px;">-<span style="letter-spacing:-0.2px">139</span></div>
<div style="position:absolute;left:785px;top:476px;width:261px;text-align:right;white-space:nowrap;font-family:'Liberation Sans', sans-serif;font-size:13px;line-height:16px;color:#000;transform:scaleY(1.08);transform-origin:0 12.5px;margin-top:1px;font-weight:bold;letter-spacing:0.12px;"><span style="letter-spacing:-0.2px">245</span></div>
<div style="position:absolute;left:37px;top:510px;white-space:nowrap;font-family:'Liberation Sans', sans-serif;font-size:13px;line-height:16px;color:#000;transform:scaleY(1.08);transform-origin:0 12.5px;margin-top:1px;font-weight:bold;letter-spacing:0.12px;">Slab</div>
<div style="position:absolute;left:58px;top:510px;width:284px;text-align:right;white-space:nowrap;font-family:'Liberation Sans', sans-serif;font-size:13px;line-height:16px;color:#000;transform:scaleY(1.08);transform-origin:0 12.5px;margin-top:1px;letter-spacing:-0.2px;">585</div>
<div style="position:absolute;left:145px;top:510px;width:261px;text-align:right;white-space:nowrap;font-family:'Liberation Sans', sans-serif;font-size:13px;line-height:16px;color:#000;transform:scaleY(1.08);transform-origin:0 12.5px;margin-top:1px;letter-spacing:-0.2px;">585</div>
<div style="position:absolute;left:209px;top:510px;width:261px;text-align:right;white-space:nowrap;font-family:'Liberation Sans', sans-serif;font-size:13px;line-height:16px;color:#000;transform:scaleY(1.08);transform-origin:0 12.5px;margin-top:1px;letter-spacing:-0.2px;">0</div>
<div style="position:absolute;left:273px;top:510px;width:261px;text-align:right;white-space:nowrap;font-family:'Liberation Sans', sans-serif;font-size:13px;line-height:16px;color:#000;transform:scaleY(1.08);transform-origin:0 12.5px;margin-top:1px;letter-spacing:-0.2px;">0</div>
<div style="position:absolute;left:337px;top:510px;width:261px;text-align:right;white-space:nowrap;font-family:'Liberation Sans', sans-serif;font-size:13px;line-height:16px;color:#000;transform:scaleY(1.08);transform-origin:0 12.5px;margin-top:1px;letter-spacing:-0.2px;">78</div>
<div style="position:absolute;left:401px;top:510px;width:261px;text-align:right;white-space:nowrap;font-family:'Liberation Sans', sans-serif;font-size:13px;line-height:16px;color:#000;transform:scaleY(1.08);transform-origin:0 12.5px;margin-top:1px;letter-spacing:-0.2px;">0</div>
<div style="position:absolute;left:465px;top:510px;width:261px;text-align:right;white-space:nowrap;font-family:'Liberation Sans', sans-serif;font-size:13px;line-height:16px;color:#000;transform:scaleY(1.08);transform-origin:0 12.5px;margin-top:1px;letter-spacing:-0.2px;">1.00</div>
<div style="position:absolute;left:529px;top:510px;width:261px;text-align:right;white-space:nowrap;font-family:'Liberation Sans', sans-serif;font-size:13px;line-height:16px;color:#000;transform:scaleY(1.08);transform-origin:0 12.5px;margin-top:1px;letter-spacing:-0.2px;">1.15</div>
<div style="position:absolute;left:593px;top:510px;width:261px;text-align:right;white-space:nowrap;font-family:'Liberation Sans', sans-serif;font-size:13px;line-height:16px;color:#000;transform:scaleY(1.08);transform-origin:0 12.5px;margin-top:1px;letter-spacing:-0.2px;">78</div>
<div style="position:absolute;left:657px;top:510px;width:261px;text-align:right;white-space:nowrap;font-family:'Liberation Sans', sans-serif;font-size:13px;line-height:16px;color:#000;transform:scaleY(1.08);transform-origin:0 12.5px;margin-top:1px;letter-spacing:-0.2px;">0</div>
<div style="position:absolute;left:721px;top:510px;width:261px;text-align:right;white-space:nowrap;font-family:'Liberation Sans', sans-serif;font-size:13px;line-height:16px;color:#000;transform:scaleY(1.08);transform-origin:0 12.5px;margin-top:1px;letter-spacing:-0.2px;">78</div>
<div style="position:absolute;left:785px;top:510px;width:261px;text-align:right;white-space:nowrap;font-family:'Liberation Sans', sans-serif;font-size:13px;line-height:16px;color:#000;transform:scaleY(1.08);transform-origin:0 12.5px;margin-top:1px;letter-spacing:-0.2px;">2</div>
<div style="position:absolute;left:37px;top:544px;white-space:nowrap;font-family:'Liberation Sans', sans-serif;font-size:13px;line-height:16px;color:#000;transform:scaleY(1.08);transform-origin:0 12.5px;margin-top:1px;font-weight:bold;letter-spacing:0.12px;">Regions Total</div>
<div style="position:absolute;left:58px;top:544px;width:284px;text-align:right;white-space:nowrap;font-family:'Liberation Sans', sans-serif;font-size:13px;line-height:16px;color:#000;transform:scaleY(1.08);transform-origin:0 12.5px;margin-top:1px;font-weight:bold;letter-spacing:0.12px;"><span style="letter-spacing:-0.2px">243,050</span></div>
<div style="position:absolute;left:145px;top:544px;width:261px;text-align:right;white-space:nowrap;font-family:'Liberation Sans', sans-serif;font-size:13px;line-height:16px;color:#000;transform:scaleY(1.08);transform-origin:0 12.5px;margin-top:1px;font-weight:bold;letter-spacing:0.12px;"><span style="letter-spacing:-0.2px">88,667</span></div>
<div style="position:absolute;left:209px;top:544px;width:261px;text-align:right;white-space:nowrap;font-family:'Liberation Sans', sans-serif;font-size:13px;line-height:16px;color:#000;transform:scaleY(1.08);transform-origin:0 12.5px;margin-top:1px;font-weight:bold;letter-spacing:0.12px;"><span style="letter-spacing:-0.2px">150,673</span></div>
<div style="position:absolute;left:273px;top:544px;width:261px;text-align:right;white-space:nowrap;font-family:'Liberation Sans', sans-serif;font-size:13px;line-height:16px;color:#000;transform:scaleY(1.08);transform-origin:0 12.5px;margin-top:1px;font-weight:bold;letter-spacing:0.12px;"><span style="letter-spacing:-0.2px">3,710</span></div>
<div style="position:absolute;left:337px;top:544px;width:261px;text-align:right;white-space:nowrap;font-family:'Liberation Sans', sans-serif;font-size:13px;line-height:16px;color:#000;transform:scaleY(1.08);transform-origin:0 12.5px;margin-top:1px;font-weight:bold;letter-spacing:0.12px;"><span style="letter-spacing:-0.2px">19,695</span></div>
<div style="position:absolute;left:401px;top:544px;width:261px;text-align:right;white-space:nowrap;font-family:'Liberation Sans', sans-serif;font-size:13px;line-height:16px;color:#000;transform:scaleY(1.08);transform-origin:0 12.5px;margin-top:1px;font-weight:bold;letter-spacing:0.12px;"><span style="letter-spacing:-0.2px">17,421</span></div>
<div style="position:absolute;left:593px;top:544px;width:261px;text-align:right;white-space:nowrap;font-family:'Liberation Sans', sans-serif;font-size:13px;line-height:16px;color:#000;transform:scaleY(1.08);transform-origin:0 12.5px;margin-top:1px;font-weight:bold;letter-spacing:0.12px;"><span style="letter-spacing:-0.2px">19,695</span></div>
<div style="position:absolute;left:657px;top:544px;width:261px;text-align:right;white-space:nowrap;font-family:'Liberation Sans', sans-serif;font-size:13px;line-height:16px;color:#000;transform:scaleY(1.08);transform-origin:0 12.5px;margin-top:1px;font-weight:bold;letter-spacing:0.12px;"><span style="letter-spacing:-0.2px">20,035</span></div>
<div style="position:absolute;left:721px;top:544px;width:261px;text-align:right;white-space:nowrap;font-family:'Liberation Sans', sans-serif;font-size:13px;line-height:16px;color:#000;transform:scaleY(1.08);transform-origin:0 12.5px;margin-top:1px;font-weight:bold;letter-spacing:0.12px;">-<span style="letter-spacing:-0.2px">340</span></div>
<div style="position:absolute;left:785px;top:544px;width:261px;text-align:right;white-space:nowrap;font-family:'Liberation Sans', sans-serif;font-size:13px;line-height:16px;color:#000;transform:scaleY(1.08);transform-origin:0 12.5px;margin-top:1px;font-weight:bold;letter-spacing:0.12px;"><span style="letter-spacing:-0.2px">1,034</span></div>
<div style="position:absolute;left:180px;top:475px;width:869px;height:1px;background:#000;"></div>
<div style="position:absolute;left:35px;top:543px;width:1014px;height:1px;background:#000;"></div>
<div style="position:absolute;left:35px;top:612px;width:437px;height:33px;background:#c0c0c0;"></div>
<div style="position:absolute;left:35px;top:611px;width:438px;height:1px;background:#000;"></div>
<div style="position:absolute;left:35px;top:645px;width:438px;height:1px;background:#000;"></div>
<div style="position:absolute;left:472px;top:611px;width:1px;height:35px;background:#000;"></div>
<div style="position:absolute;left:-19px;top:612px;width:274px;text-align:right;white-space:nowrap;font-family:'Liberation Sans', sans-serif;font-size:13px;line-height:16px;color:#000;transform:scaleY(1.08);transform-origin:0 12.5px;margin-top:1px;font-weight:bold;letter-spacing:0.12px;">Plane</div>
<div style="position:absolute;left:58px;top:612px;width:284px;text-align:right;white-space:nowrap;font-family:'Liberation Sans', sans-serif;font-size:13px;line-height:16px;color:#000;transform:scaleY(1.08);transform-origin:0 12.5px;margin-top:1px;font-weight:bold;letter-spacing:0.12px;">Slope</div>
<div style="position:absolute;left:-165px;top:629px;width:343px;text-align:right;white-space:nowrap;font-family:'Liberation Sans', sans-serif;font-size:13px;line-height:16px;color:#000;transform:scaleY(1.08);transform-origin:0 12.5px;margin-top:1px;font-weight:bold;letter-spacing:0.12px;">Stripping Qtys</div>
<div style="position:absolute;left:-19px;top:629px;width:274px;text-align:right;white-space:nowrap;font-family:'Liberation Sans', sans-serif;font-size:13px;line-height:16px;color:#000;transform:scaleY(1.08);transform-origin:0 12.5px;margin-top:1px;font-weight:bold;letter-spacing:0.12px;">Area</div>
<div style="position:absolute;left:58px;top:629px;width:284px;text-align:right;white-space:nowrap;font-family:'Liberation Sans', sans-serif;font-size:13px;line-height:16px;color:#000;transform:scaleY(1.08);transform-origin:0 12.5px;margin-top:1px;font-weight:bold;letter-spacing:0.12px;">Area</div>
<div style="position:absolute;left:145px;top:629px;width:261px;text-align:right;white-space:nowrap;font-family:'Liberation Sans', sans-serif;font-size:13px;line-height:16px;color:#000;transform:scaleY(1.08);transform-origin:0 12.5px;margin-top:1px;font-weight:bold;letter-spacing:0.12px;">Depth</div>
<div style="position:absolute;left:209px;top:629px;width:261px;text-align:right;white-space:nowrap;font-family:'Liberation Sans', sans-serif;font-size:13px;line-height:16px;color:#000;transform:scaleY(1.08);transform-origin:0 12.5px;margin-top:1px;font-weight:bold;letter-spacing:0.12px;">Volume</div>
<div style="position:absolute;left:37px;top:646px;white-space:nowrap;font-family:'Liberation Sans', sans-serif;font-size:13px;line-height:16px;color:#000;transform:scaleY(1.08);transform-origin:0 12.5px;margin-top:1px;font-weight:bold;letter-spacing:0.12px;">Strip</div>
<div style="position:absolute;left:-19px;top:646px;width:274px;text-align:right;white-space:nowrap;font-family:'Liberation Sans', sans-serif;font-size:13px;line-height:16px;color:#000;transform:scaleY(1.08);transform-origin:0 12.5px;margin-top:1px;letter-spacing:-0.2px;">238,487</div>
<div style="position:absolute;left:58px;top:646px;width:284px;text-align:right;white-space:nowrap;font-family:'Liberation Sans', sans-serif;font-size:13px;line-height:16px;color:#000;transform:scaleY(1.08);transform-origin:0 12.5px;margin-top:1px;letter-spacing:-0.2px;">241,606</div>
<div style="position:absolute;left:145px;top:646px;width:261px;text-align:right;white-space:nowrap;font-family:'Liberation Sans', sans-serif;font-size:13px;line-height:16px;color:#000;transform:scaleY(1.08);transform-origin:0 12.5px;margin-top:1px;letter-spacing:-0.2px;">0.500</div>
<div style="position:absolute;left:209px;top:646px;width:261px;text-align:right;white-space:nowrap;font-family:'Liberation Sans', sans-serif;font-size:13px;line-height:16px;color:#000;transform:scaleY(1.08);transform-origin:0 12.5px;margin-top:1px;letter-spacing:-0.2px;">4,474</div>
<div style="position:absolute;left:35px;top:714px;width:437px;height:33px;background:#c0c0c0;"></div>
<div style="position:absolute;left:35px;top:713px;width:438px;height:1px;background:#000;"></div>
<div style="position:absolute;left:35px;top:747px;width:438px;height:1px;background:#000;"></div>
<div style="position:absolute;left:472px;top:713px;width:1px;height:35px;background:#000;"></div>
<div style="position:absolute;left:-19px;top:714px;width:274px;text-align:right;white-space:nowrap;font-family:'Liberation Sans', sans-serif;font-size:13px;line-height:16px;color:#000;transform:scaleY(1.08);transform-origin:0 12.5px;margin-top:1px;font-weight:bold;letter-spacing:0.12px;">Plane</div>
<div style="position:absolute;left:58px;top:714px;width:284px;text-align:right;white-space:nowrap;font-family:'Liberation Sans', sans-serif;font-size:13px;line-height:16px;color:#000;transform:scaleY(1.08);transform-origin:0 12.5px;margin-top:1px;font-weight:bold;letter-spacing:0.12px;">Slope</div>
<div style="position:absolute;left:-165px;top:731px;width:343px;text-align:right;white-space:nowrap;font-family:'Liberation Sans', sans-serif;font-size:13px;line-height:16px;color:#000;transform:scaleY(1.08);transform-origin:0 12.5px;margin-top:1px;font-weight:bold;letter-spacing:0.12px;">Sectional Qtys</div>
<div style="position:absolute;left:-19px;top:731px;width:274px;text-align:right;white-space:nowrap;font-family:'Liberation Sans', sans-serif;font-size:13px;line-height:16px;color:#000;transform:scaleY(1.08);transform-origin:0 12.5px;margin-top:1px;font-weight:bold;letter-spacing:0.12px;">Area</div>
<div style="position:absolute;left:58px;top:731px;width:284px;text-align:right;white-space:nowrap;font-family:'Liberation Sans', sans-serif;font-size:13px;line-height:16px;color:#000;transform:scaleY(1.08);transform-origin:0 12.5px;margin-top:1px;font-weight:bold;letter-spacing:0.12px;">Area</div>
<div style="position:absolute;left:145px;top:731px;width:261px;text-align:right;white-space:nowrap;font-family:'Liberation Sans', sans-serif;font-size:13px;line-height:16px;color:#000;transform:scaleY(1.08);transform-origin:0 12.5px;margin-top:1px;font-weight:bold;letter-spacing:0.12px;">Depth</div>
<div style="position:absolute;left:209px;top:731px;width:261px;text-align:right;white-space:nowrap;font-family:'Liberation Sans', sans-serif;font-size:13px;line-height:16px;color:#000;transform:scaleY(1.08);transform-origin:0 12.5px;margin-top:1px;font-weight:bold;letter-spacing:0.12px;">Volume</div>
<div style="position:absolute;left:37px;top:748px;white-space:nowrap;font-family:'Liberation Sans', sans-serif;font-size:13px;line-height:16px;color:#000;transform:scaleY(1.08);transform-origin:0 12.5px;margin-top:1px;font-weight:bold;letter-spacing:0.12px;">Apron</div>
<div style="position:absolute;left:-19px;top:748px;width:274px;text-align:right;white-space:nowrap;font-family:'Liberation Sans', sans-serif;font-size:13px;line-height:16px;color:#000;transform:scaleY(1.08);transform-origin:0 12.5px;margin-top:1px;letter-spacing:-0.2px;">459</div>
<div style="position:absolute;left:58px;top:748px;width:284px;text-align:right;white-space:nowrap;font-family:'Liberation Sans', sans-serif;font-size:13px;line-height:16px;color:#000;transform:scaleY(1.08);transform-origin:0 12.5px;margin-top:1px;letter-spacing:-0.2px;">470</div>
<div style="position:absolute;left:145px;top:748px;width:261px;text-align:right;white-space:nowrap;font-family:'Liberation Sans', sans-serif;font-size:13px;line-height:16px;color:#000;transform:scaleY(1.08);transform-origin:0 12.5px;margin-top:1px;letter-spacing:-0.2px;">1.000</div>
<div style="position:absolute;left:209px;top:748px;width:261px;text-align:right;white-space:nowrap;font-family:'Liberation Sans', sans-serif;font-size:13px;line-height:16px;color:#000;transform:scaleY(1.08);transform-origin:0 12.5px;margin-top:1px;letter-spacing:-0.2px;">17</div>
<div style="position:absolute;left:37px;top:782px;white-space:nowrap;font-family:'Liberation Sans', sans-serif;font-size:13px;line-height:16px;color:#000;transform:scaleY(1.08);transform-origin:0 12.5px;margin-top:1px;font-weight:bold;letter-spacing:0.12px;">Building</div>
<div style="position:absolute;left:-19px;top:782px;width:274px;text-align:right;white-space:nowrap;font-family:'Liberation Sans', sans-serif;font-size:13px;line-height:16px;color:#000;transform:scaleY(1.08);transform-origin:0 12.5px;margin-top:1px;letter-spacing:-0.2px;">30,805</div>
<div style="position:absolute;left:58px;top:782px;width:284px;text-align:right;white-space:nowrap;font-family:'Liberation Sans', sans-serif;font-size:13px;line-height:16px;color:#000;transform:scaleY(1.08);transform-origin:0 12.5px;margin-top:1px;letter-spacing:-0.2px;">30,805</div>
<div style="position:absolute;left:145px;top:782px;width:261px;text-align:right;white-space:nowrap;font-family:'Liberation Sans', sans-serif;font-size:13px;line-height:16px;color:#000;transform:scaleY(1.08);transform-origin:0 12.5px;margin-top:1px;letter-spacing:-0.2px;">0.670</div>
<div style="position:absolute;left:209px;top:782px;width:261px;text-align:right;white-space:nowrap;font-family:'Liberation Sans', sans-serif;font-size:13px;line-height:16px;color:#000;transform:scaleY(1.08);transform-origin:0 12.5px;margin-top:1px;letter-spacing:-0.2px;">764</div>
<div style="position:absolute;left:180px;top:187px;width:2px;height:17px;background:#000;"></div>
<div style="position:absolute;left:35px;top:203px;width:147px;height:2px;background:#000;"></div>
<div style="position:absolute;left:178px;top:201px;width:6px;height:6px;background:#000;border:1px solid #fff;box-sizing:border-box;"></div>
<div style="position:absolute;left:1061px;top:170px;width:11px;height:646px;background:#dfe2e7;"></div>
<div style="position:absolute;left:1061px;top:170px;width:1px;height:646px;background:#c5c9cf;"></div>
<div style="position:absolute;left:1062px;top:170px;width:10px;height:8px;background:#fff;border:1px solid #8c9197;box-sizing:border-box;"></div>
<div style="position:absolute;left:1064px;top:173px;width:6px;height:1px;background:#8c9197;"></div>
<svg style="position:absolute;left:1064px;top:183px" width="8" height="6" viewBox="0 0 8 6"><path d="M0 5 L4 0.5 L8 5 Z" fill="#4e5258"/></svg>
<div style="position:absolute;left:1062px;top:195px;width:10px;height:324px;background:linear-gradient(90deg,#f1f3f6,#e7eaee);border:1px solid #9a9fa6;border-right:none;border-radius:2px 0 0 2px;box-sizing:border-box;"></div>
<div style="position:absolute;left:1065px;top:353px;width:7px;height:1px;background:#7c8188;"></div>
<div style="position:absolute;left:1065px;top:355px;width:7px;height:1px;background:#7c8188;"></div>
<div style="position:absolute;left:1065px;top:357px;width:7px;height:1px;background:#7c8188;"></div>
<div style="position:absolute;left:1065px;top:359px;width:7px;height:1px;background:#7c8188;"></div>
<svg style="position:absolute;left:1064px;top:806px" width="8" height="6" viewBox="0 0 8 6"><path d="M0 0.5 L8 0.5 L4 5 Z" fill="#4e5258"/></svg>
<div style="position:absolute;left:9px;top:816px;width:1052px;height:17px;background:#dfe2e7;"></div>
<div style="position:absolute;left:9px;top:816px;width:1052px;height:1px;background:#f4f5f7;"></div>
<div style="position:absolute;left:9px;top:817px;width:1052px;height:1px;background:#a9aeb4;"></div>
<div style="position:absolute;left:9px;top:818px;width:1052px;height:1px;background:#f3f5f8;"></div>
<div style="position:absolute;left:9px;top:831px;width:1052px;height:1px;background:#eef0f3;"></div>
<div style="position:absolute;left:9px;top:832px;width:1063px;height:1px;background:#d9dce0;"></div>
<div style="position:absolute;left:9px;top:817px;width:63px;height:15px;background:linear-gradient(#f6f7f9 0,#f6f7f9 1px,#dde1e6 1px);border-top:1px solid #a9aeb4;border-right:1px solid #a9aeb4;border-radius:0 3px 0 0;box-sizing:border-box;"></div>
<svg style="position:absolute;left:14px;top:821px" width="52" height="7" viewBox="0 0 52 7"><path d="M1.5 0v7" stroke="#4e5258"/><path d="M3 3.5 L7 0 L7 7 Z" fill="#4e5258"/><path d="M17 3.5 L21 0 L21 7 Z" fill="#4e5258"/><path d="M31 0 L35 3.5 L31 7 Z" fill="#4e5258"/><path d="M45 0 L49 3.5 L45 7 Z" fill="#4e5258"/><path d="M50.5 0v7" stroke="#4e5258"/></svg>
<svg style="position:absolute;left:72px;top:816px" width="104" height="17" viewBox="0 0 104 17"><path d="M0 0 L0 16.5 L57 16.5 L71 0 Z" fill="#fff"/><path d="M57 16.5 L71 1" stroke="#8d9298"/><path d="M58 16.5 L72 1.5 L102 1.5 L89 16.5 Z" fill="#e6e9ed" stroke="#a9aeb4"/></svg>
<div style="position:absolute;left:79.95px;top:818px;white-space:nowrap;transform-origin:0 0;font:bold 13px 'Liberation Sans', sans-serif;color:#1a1d22;transform:scaleX(1.0476);">Sheet1</div>
<svg style="position:absolute;left:143px;top:819px" width="15" height="12" viewBox="0 0 15 12"><path d="M2.5 3.5 L13.5 3.5 L13.5 10.5 L4.5 10.5 L2.5 8.5 Z" fill="#eef3fa" stroke="#6f8fc0"/><path d="M4 10.5 L4 8.5 L2.5 8.5" fill="none" stroke="#6f8fc0"/><path d="M3.5 0 L4.3 2.3 L6.8 2 L5 3.7 L6 6 L3.5 5 L1.2 6 L2 3.7 L0.2 2 L2.7 2.3 Z" fill="#f5a81c"/></svg>
<div style="position:absolute;left:640px;top:818px;width:8px;height:15px;background:#fff;border:1px solid #8c9197;box-sizing:border-box;"></div>
<div style="position:absolute;left:643px;top:822px;width:1px;height:7px;background:#80858c;"></div>
<svg style="position:absolute;left:653px;top:821px" width="6" height="9" viewBox="0 0 6 9"><path d="M5.5 0 L0 4.5 L5.5 9 Z" fill="#4a4e54"/></svg>
<div style="position:absolute;left:665px;top:817px;width:344px;height:16px;background:linear-gradient(#f6f7f9,#e6e9ed);border:1px solid #90959c;border-bottom:none;border-radius:2px 2px 0 0;box-sizing:border-box;"></div>
<div style="position:absolute;left:834px;top:822px;width:1px;height:6px;background:#7c8188;"></div>
<div style="position:absolute;left:836px;top:822px;width:1px;height:6px;background:#7c8188;"></div>
<div style="position:absolute;left:838px;top:822px;width:1px;height:6px;background:#7c8188;"></div>
<div style="position:absolute;left:840px;top:822px;width:1px;height:6px;background:#7c8188;"></div>
<svg style="position:absolute;left:1042px;top:821px" width="6" height="9" viewBox="0 0 6 9"><path d="M0.5 0 L6 4.5 L0.5 9 Z" fill="#4a4e54"/></svg>
<div style="position:absolute;left:1053px;top:818px;width:8px;height:15px;background:#fff;border:1px solid #8c9197;box-sizing:border-box;"></div>
<div style="position:absolute;left:1056px;top:822px;width:1px;height:7px;background:#80858c;"></div>
<div style="position:absolute;left:1061px;top:816px;width:11px;height:17px;background:#e4e7eb;"></div>
</body></html>
